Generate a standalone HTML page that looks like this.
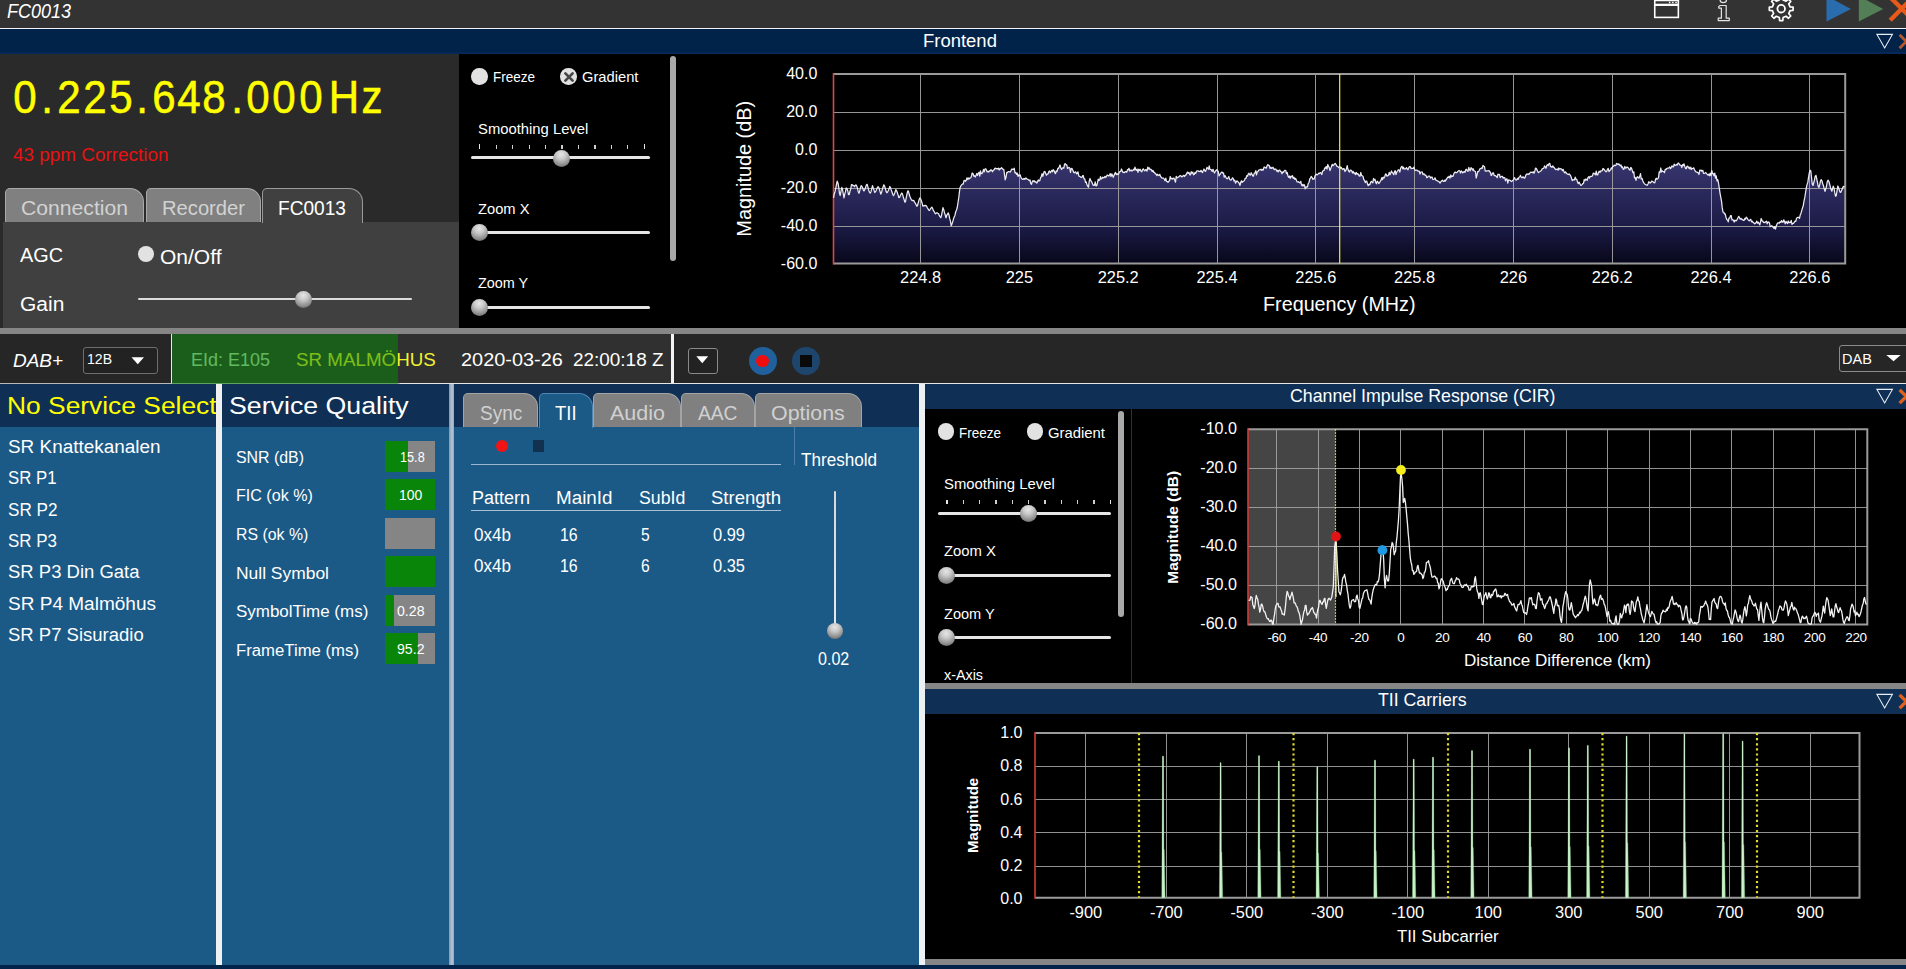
<!DOCTYPE html>
<html lang="en"><head><meta charset="utf-8"><title>FC0013</title>
<style>
html,body{margin:0;padding:0;background:#000;}
body{width:1906px;height:969px;overflow:hidden;position:relative;font-family:"Liberation Sans",sans-serif;}
div,span.t,svg{position:absolute;}
.t{white-space:nowrap;line-height:1;transform-origin:0 0;}
.i{font-style:italic;}
.th{border-radius:50%;width:17px;height:17px;background:radial-gradient(circle at 48% 26%,#e6e6e6 0%,#cacaca 30%,#8e8e8e 68%,#505050 100%);}
.rb{border-radius:50%;width:16.5px;height:16.5px;background:#e2e2e2;}
.tr{height:3px;background:#e6e6e6;border-radius:1.5px;}
.sb{background:#a8a8a8;border-radius:3px;width:6px;}
.tab{box-sizing:border-box;border:1px solid #a9a9a9;border-bottom:none;border-radius:5px 14px 0 0;background:#808080;}
.clip{overflow:hidden;}
</style></head>
<body>
<div style="left:0px;top:0px;width:1906px;height:28px;background:#333333;"></div>
<div style="left:0px;top:27.5px;width:1906px;height:1.6px;background:#f4f4f4;"></div>
<div style="left:0px;top:29px;width:1906px;height:25px;background:#01234a;"></div>
<div style="left:0px;top:51.5px;width:1906px;height:2.5px;background:#04285a;"></div>
<span id="t1" class="t i" style="left:7.00px;top:2.29px;font-size:19.5px;color:#fff;transform:scaleX(0.9225);">FC0013</span>
<span id="t2" class="t" style="left:923.30px;top:32.69px;font-size:17.5px;color:#fff;transform:scaleX(1.0550);">Frontend</span>
<div style="left:0px;top:54px;width:459px;height:274px;background:#2a2a2a;"></div>
<div style="left:3px;top:222px;width:456px;height:106px;background:#404040;"></div>
<div style="left:459px;top:54px;width:1447px;height:274px;background:#000;"></div>
<div id="freq" style="left:0;top:0;width:459px;height:130px"><span class="t" style="left:5.2px;width:40px;text-align:center;top:74.9px;font-size:45.5px;color:#ffff00;-webkit-text-stroke:0.55px #ffff00;transform:scaleX(0.925);transform-origin:50% 0">0</span><span class="t" style="left:26.5px;width:40px;text-align:center;top:74.9px;font-size:45.5px;color:#ffff00;-webkit-text-stroke:0.55px #ffff00;transform:scaleX(0.925);transform-origin:50% 0">.</span><span class="t" style="left:49.2px;width:40px;text-align:center;top:74.9px;font-size:45.5px;color:#ffff00;-webkit-text-stroke:0.55px #ffff00;transform:scaleX(0.925);transform-origin:50% 0">2</span><span class="t" style="left:74.8px;width:40px;text-align:center;top:74.9px;font-size:45.5px;color:#ffff00;-webkit-text-stroke:0.55px #ffff00;transform:scaleX(0.925);transform-origin:50% 0">2</span><span class="t" style="left:100.5px;width:40px;text-align:center;top:74.9px;font-size:45.5px;color:#ffff00;-webkit-text-stroke:0.55px #ffff00;transform:scaleX(0.925);transform-origin:50% 0">5</span><span class="t" style="left:122.0px;width:40px;text-align:center;top:74.9px;font-size:45.5px;color:#ffff00;-webkit-text-stroke:0.55px #ffff00;transform:scaleX(0.925);transform-origin:50% 0">.</span><span class="t" style="left:143.5px;width:40px;text-align:center;top:74.9px;font-size:45.5px;color:#ffff00;-webkit-text-stroke:0.55px #ffff00;transform:scaleX(0.925);transform-origin:50% 0">6</span><span class="t" style="left:168.8px;width:40px;text-align:center;top:74.9px;font-size:45.5px;color:#ffff00;-webkit-text-stroke:0.55px #ffff00;transform:scaleX(0.925);transform-origin:50% 0">4</span><span class="t" style="left:194.0px;width:40px;text-align:center;top:74.9px;font-size:45.5px;color:#ffff00;-webkit-text-stroke:0.55px #ffff00;transform:scaleX(0.925);transform-origin:50% 0">8</span><span class="t" style="left:216.8px;width:40px;text-align:center;top:74.9px;font-size:45.5px;color:#ffff00;-webkit-text-stroke:0.55px #ffff00;transform:scaleX(0.925);transform-origin:50% 0">.</span><span class="t" style="left:238.0px;width:40px;text-align:center;top:74.9px;font-size:45.5px;color:#ffff00;-webkit-text-stroke:0.55px #ffff00;transform:scaleX(0.925);transform-origin:50% 0">0</span><span class="t" style="left:264.2px;width:40px;text-align:center;top:74.9px;font-size:45.5px;color:#ffff00;-webkit-text-stroke:0.55px #ffff00;transform:scaleX(0.925);transform-origin:50% 0">0</span><span class="t" style="left:290.5px;width:40px;text-align:center;top:74.9px;font-size:45.5px;color:#ffff00;-webkit-text-stroke:0.55px #ffff00;transform:scaleX(0.925);transform-origin:50% 0">0</span><span class="t" style="left:324.2px;width:40px;text-align:center;top:74.9px;font-size:45.5px;color:#ffff00;-webkit-text-stroke:0.55px #ffff00;transform:scaleX(0.925);transform-origin:50% 0">H</span><span class="t" style="left:351.5px;width:40px;text-align:center;top:74.9px;font-size:45.5px;color:#ffff00;-webkit-text-stroke:0.55px #ffff00;transform:scaleX(0.925);transform-origin:50% 0">z</span></div>
<span id="t3" class="t" style="left:12.50px;top:147.39px;font-size:17.5px;color:#e81212;transform:scaleX(1.0801);">43 ppm Correction</span>
<div class="tab" style="left:5px;top:188px;width:139px;height:34px"></div>
<div class="tab" style="left:146px;top:188px;width:115px;height:34px"></div>
<div class="tab" style="left:262px;top:188px;width:101px;height:35px;background:#404040;border-color:#9a9a9a"></div>
<span id="t4" class="t" style="left:21.30px;top:197.77px;font-size:20px;color:#d2d2d2;transform:scaleX(1.0574);">Connection</span>
<span id="t5" class="t" style="left:162.00px;top:197.77px;font-size:20px;color:#d2d2d2;transform:scaleX(1.0089);">Recorder</span>
<span id="t6" class="t" style="left:278.30px;top:197.77px;font-size:20px;color:#fff;transform:scaleX(0.9556);">FC0013</span>
<span id="t7" class="t" style="left:20.20px;top:245.27px;font-size:20px;color:#fff;transform:scaleX(0.9944);">AGC</span>
<div class="rb" style="left:137.8px;top:246.3px;width:16px;height:16px"></div>
<span id="t8" class="t" style="left:159.50px;top:246.97px;font-size:20px;color:#fff;transform:scaleX(1.0504);">On/Off</span>
<span id="t9" class="t" style="left:20.20px;top:293.77px;font-size:20px;color:#fff;transform:scaleX(1.0485);">Gain</span>
<div class="tr" style="left:138px;top:297.8px;width:274px;height:2.6px;background:#dcdcdc"></div>
<div class="th" style="left:294.5px;top:290.5px"></div>
<div class="rb" style="left:471.2px;top:68.3px"></div>
<div class="rb" style="left:560.3px;top:68.3px"></div>
<svg style="left:562.5px;top:70.5px" width="12" height="12" viewBox="-6 -6 12 12"><path d="M-3.6-3.6L3.6 3.6M3.6-3.6L-3.6 3.6" stroke="#474747" stroke-width="2.7" stroke-linecap="round" fill="none"/></svg>
<span id="t10" class="t" style="left:493.00px;top:70.37px;font-size:14.8px;color:#fff;transform:scaleX(0.9118);">Freeze</span>
<span id="t11" class="t" style="left:582.00px;top:70.37px;font-size:14.8px;color:#fff;transform:scaleX(0.9936);">Gradient</span>
<span id="t12" class="t" style="left:477.70px;top:121.67px;font-size:14.8px;color:#fff;transform:scaleX(1.0006);">Smoothing Level</span>
<div style="left:479.1px;top:144.2px;width:1.4px;height:4.8px;background:#e6e6e6"></div><div style="left:495.6px;top:144.8px;width:1.4px;height:4.2px;background:#cfcfcf"></div><div style="left:512.0px;top:144.8px;width:1.4px;height:4.2px;background:#cfcfcf"></div><div style="left:528.5px;top:144.8px;width:1.4px;height:4.2px;background:#cfcfcf"></div><div style="left:544.9px;top:144.8px;width:1.4px;height:4.2px;background:#cfcfcf"></div><div style="left:561.4px;top:144.8px;width:1.4px;height:4.2px;background:#cfcfcf"></div><div style="left:577.8px;top:144.8px;width:1.4px;height:4.2px;background:#cfcfcf"></div><div style="left:594.2px;top:144.8px;width:1.4px;height:4.2px;background:#cfcfcf"></div><div style="left:610.7px;top:144.8px;width:1.4px;height:4.2px;background:#cfcfcf"></div><div style="left:627.1px;top:144.8px;width:1.4px;height:4.2px;background:#cfcfcf"></div><div style="left:643.6px;top:144.2px;width:1.4px;height:4.8px;background:#e6e6e6"></div>
<div class="tr" style="left:471.2px;top:156.2px;width:179px"></div>
<div class="th" style="left:553.3px;top:149.7px"></div>
<span id="t13" class="t" style="left:477.80px;top:201.67px;font-size:14.8px;color:#fff;transform:scaleX(0.9940);">Zoom X</span>
<div class="tr" style="left:478px;top:230.8px;width:172px"></div>
<div class="th" style="left:471.4px;top:224.2px"></div>
<span id="t14" class="t" style="left:477.80px;top:276.37px;font-size:14.8px;color:#fff;transform:scaleX(0.9739);">Zoom Y</span>
<div class="tr" style="left:478px;top:305.6px;width:172px"></div>
<div class="th" style="left:471.4px;top:299px"></div>
<div class="sb" style="left:670.4px;top:55.5px;height:205.5px"></div>
<div style="left:0px;top:328px;width:1906px;height:6px;background:#868686;"></div>
<div style="left:0px;top:334px;width:171px;height:49.5px;background:#262626;"></div>
<div style="left:171px;top:334px;width:1.3px;height:49.5px;background:#e8e8e8;"></div>
<div style="left:172px;top:334px;width:499px;height:49.5px;background:#303030;"></div>
<div style="left:671px;top:334px;width:3px;height:49.5px;background:#f2f2f2;"></div>
<div style="left:674px;top:334px;width:1232px;height:49.5px;background:#262626;"></div>
<div style="left:0px;top:383px;width:400px;height:1px;background:#b9b9b9;"></div>
<div style="left:400px;top:383px;width:1506px;height:1.3px;background:#e6e6e6;"></div>
<span id="t15" class="t i" style="left:13.00px;top:351.12px;font-size:19px;color:#fff;transform:scaleX(0.9966);">DAB+</span>
<div style="left:83px;top:347px;width:74.5px;height:26.5px;box-sizing:border-box;border:1px solid #6e6e6e;border-radius:3px;background:#222"></div>
<span id="t16" class="t" style="left:87.00px;top:352.04px;font-size:14.6px;color:#fff;transform:scaleX(0.9627);">12B</span>
<svg style="left:131px;top:357px" width="14" height="8" viewBox="0 0 14 8"><path d="M0.5 0.3H13L6.75 7.3Z" fill="#fff"/></svg>
<span id="t17" class="t" style="left:191.00px;top:350.12px;font-size:19px;color:#bce6bc;transform:scaleX(0.9466);">EId: E105</span>
<span id="t18" class="t" style="left:295.70px;top:350.12px;font-size:19px;color:#f2f22e;transform:scaleX(0.9882);">SR MALMÖHUS</span>
<div style="left:172px;top:334px;width:226px;height:49.5px;background:rgba(6,140,6,0.5);"></div>
<span id="t19" class="t" style="left:460.70px;top:350.12px;font-size:19px;color:#fff;transform:scaleX(1.0473);">2020-03-26</span>
<span id="t20" class="t" style="left:573.20px;top:350.12px;font-size:19px;color:#fff;transform:scaleX(0.9962);">22:00:18 Z</span>
<div style="left:687.5px;top:347.5px;width:30.5px;height:26.5px;box-sizing:border-box;border:1px solid #8a8a8a;border-radius:3px;background:#222"></div>
<svg style="left:696px;top:356px" width="13" height="8" viewBox="0 0 13 8"><path d="M0.3 0.2H12.2L6.25 7.2Z" fill="#fff"/></svg>
<div style="left:748.5px;top:347px;width:28px;height:28px;border-radius:50%;background:#20609c"></div>
<div style="left:756.2px;top:354.8px;width:12.6px;height:12.6px;border-radius:50%;background:#f20d0d"></div>
<div style="left:792px;top:347px;width:28px;height:28px;border-radius:50%;background:#1e456c"></div>
<div style="left:800.4px;top:355.4px;width:11.2px;height:11.2px;background:#0a0a0a"></div>
<div style="left:1839px;top:345px;width:80px;height:27px;box-sizing:border-box;border:1px solid #8a8a8a;border-radius:3px;background:#262626"></div>
<span id="t21" class="t" style="left:1841.70px;top:351.70px;font-size:14.3px;color:#fff;transform:scaleX(1.0134);">DAB</span>
<svg style="left:1885.5px;top:354.8px" width="15" height="7" viewBox="0 0 15 7"><path d="M0.3 0.1H14.7L7.5 6.3Z" fill="#fff"/></svg>
<div style="left:0px;top:384px;width:925px;height:581px;background:#1b5986;"></div>
<div style="left:0px;top:384px;width:919px;height:43px;background:#0f2f55;"></div>
<div style="left:0px;top:965px;width:1906px;height:4px;background:#01234a;"></div>
<div style="left:215.9px;top:384px;width:6.5px;height:581px;background:#eff0f2;"></div>
<div style="left:449px;top:384px;width:4.7px;height:581px;background:linear-gradient(90deg,#7f97b0,#b9c6d4 60%,#8fa4ba);"></div>
<div style="left:918.7px;top:384px;width:6.3px;height:581px;background:#eef1f4;"></div>
<div class="clip" style="left:0;top:384px;width:215.9px;height:60px"><div style="left:0;top:-384px;width:400px;height:60px"><span id="t22" class="t" style="left:7.00px;top:395.08px;font-size:23.3px;color:#ffff00;transform:scaleX(1.1320);">No Service Selected</span></div></div>
<span id="t23" class="t" style="left:8.00px;top:437.96px;font-size:18px;color:#fff;transform:scaleX(1.0509);">SR Knattekanalen</span>
<span id="t24" class="t" style="left:8.00px;top:469.29px;font-size:18px;color:#fff;transform:scaleX(0.9321);">SR P1</span>
<span id="t25" class="t" style="left:8.00px;top:500.62px;font-size:18px;color:#fff;transform:scaleX(0.9514);">SR P2</span>
<span id="t26" class="t" style="left:8.00px;top:531.95px;font-size:18px;color:#fff;transform:scaleX(0.9417);">SR P3</span>
<span id="t27" class="t" style="left:8.00px;top:563.28px;font-size:18px;color:#fff;transform:scaleX(1.0268);">SR P3 Din Gata</span>
<span id="t28" class="t" style="left:8.00px;top:594.61px;font-size:18px;color:#fff;transform:scaleX(1.0567);">SR P4 Malmöhus</span>
<span id="t29" class="t" style="left:8.00px;top:625.94px;font-size:18px;color:#fff;transform:scaleX(1.0274);">SR P7 Sisuradio</span>
<span id="t30" class="t" style="left:229.00px;top:395.08px;font-size:23.3px;color:#fff;transform:scaleX(1.1470);">Service Quality</span>
<span id="t31" class="t" style="left:235.70px;top:448.56px;font-size:17.3px;color:#fff;transform:scaleX(0.9197);">SNR (dB)</span>
<div style="left:385px;top:440.5px;width:50.2px;height:31px;background:#858585;"></div>
<div style="left:385px;top:440.5px;width:23px;height:31px;background:#098509;"></div>
<span id="t32" class="t" style="left:399.50px;top:448.70px;font-size:15px;color:#fff;transform:scaleX(0.8458);">15.8</span>
<span id="t33" class="t" style="left:235.70px;top:487.21px;font-size:17.3px;color:#fff;transform:scaleX(0.9300);">FIC (ok %)</span>
<div style="left:385px;top:479.05px;width:50.2px;height:31px;background:#858585;"></div>
<div style="left:385px;top:479.05px;width:50.2px;height:31px;background:#098509;"></div>
<span id="t34" class="t" style="left:399.20px;top:487.25px;font-size:15px;color:#fff;transform:scaleX(0.9308);">100</span>
<span id="t35" class="t" style="left:235.70px;top:525.86px;font-size:17.3px;color:#fff;transform:scaleX(0.9181);">RS (ok %)</span>
<div style="left:385px;top:517.6px;width:50.2px;height:31px;background:#858585;"></div>
<span id="t36" class="t" style="left:235.70px;top:564.51px;font-size:17.3px;color:#fff;transform:scaleX(1.0086);">Null Symbol</span>
<div style="left:385px;top:556.15px;width:50.2px;height:31px;background:#858585;"></div>
<div style="left:385px;top:556.15px;width:50.2px;height:31px;background:#098509;"></div>
<span id="t37" class="t" style="left:235.70px;top:603.16px;font-size:17.3px;color:#fff;transform:scaleX(0.9819);">SymbolTime (ms)</span>
<div style="left:385px;top:594.7px;width:50.2px;height:31px;background:#858585;"></div>
<div style="left:385px;top:594.7px;width:9.2px;height:31px;background:#098509;"></div>
<span id="t38" class="t" style="left:396.70px;top:602.90px;font-size:15px;color:#fff;transform:scaleX(0.9417);">0.28</span>
<span id="t39" class="t" style="left:235.70px;top:641.81px;font-size:17.3px;color:#fff;transform:scaleX(0.9681);">FrameTime (ms)</span>
<div style="left:385px;top:633.25px;width:50.2px;height:31px;background:#858585;"></div>
<div style="left:385px;top:633.25px;width:32.5px;height:31px;background:#098509;"></div>
<span id="t40" class="t" style="left:396.70px;top:641.45px;font-size:15px;color:#fff;transform:scaleX(0.9417);">95.2</span>
<div class="tab" style="left:463px;top:393px;width:75px;height:34px;border-color:#a4a4a4"></div>
<div class="tab" style="left:593px;top:393px;width:87.5px;height:34px;border-color:#a4a4a4"></div>
<div class="tab" style="left:681px;top:393px;width:73.5px;height:34px;border-color:#a4a4a4"></div>
<div class="tab" style="left:754.5px;top:393px;width:107px;height:34px;border-color:#a4a4a4"></div>
<div class="tab" style="left:539px;top:393px;width:54px;height:35px;background:#1b5986;border-color:#4f86b4"></div>
<span id="t41" class="t" style="left:479.50px;top:402.42px;font-size:21px;color:#d0d0d0;transform:scaleX(0.9039);">Sync</span>
<span id="t42" class="t" style="left:554.50px;top:402.42px;font-size:21px;color:#fff;transform:scaleX(0.8776);">TII</span>
<span id="t43" class="t" style="left:609.50px;top:402.42px;font-size:21px;color:#d0d0d0;transform:scaleX(1.0239);">Audio</span>
<span id="t44" class="t" style="left:698.00px;top:402.42px;font-size:21px;color:#d0d0d0;transform:scaleX(0.9146);">AAC</span>
<span id="t45" class="t" style="left:770.70px;top:402.42px;font-size:21px;color:#d0d0d0;transform:scaleX(1.0197);">Options</span>
<div style="left:496px;top:439.5px;width:12px;height:12px;border-radius:50%;background:#f01414"></div>
<div style="left:533px;top:439.5px;width:11px;height:12.2px;background:#12304f;"></div>
<div style="left:471px;top:464px;width:310px;height:1px;background:#9db6cf;"></div>
<div style="left:793.5px;top:427px;width:1px;height:37.5px;background:#4a7ea9;"></div>
<span id="t46" class="t" style="left:800.70px;top:450.66px;font-size:18px;color:#fff;transform:scaleX(0.9507);">Threshold</span>
<span id="t47" class="t" style="left:472.00px;top:488.96px;font-size:18px;color:#fff;transform:scaleX(0.9992);">Pattern</span>
<span id="t48" class="t" style="left:556.00px;top:488.96px;font-size:18px;color:#fff;transform:scaleX(1.0457);">MainId</span>
<span id="t49" class="t" style="left:638.70px;top:488.96px;font-size:18px;color:#fff;transform:scaleX(0.9841);">SubId</span>
<span id="t50" class="t" style="left:711.00px;top:488.96px;font-size:18px;color:#fff;transform:scaleX(1.0287);">Strength</span>
<div style="left:471px;top:509.5px;width:310px;height:1px;background:#a9c0d6;"></div>
<span id="t51" class="t" style="left:473.70px;top:525.96px;font-size:18px;color:#fff;transform:scaleX(0.9476);">0x4b</span>
<span id="t52" class="t" style="left:559.50px;top:525.96px;font-size:18px;color:#fff;transform:scaleX(0.8836);">16</span>
<span id="t53" class="t" style="left:641.30px;top:525.96px;font-size:18px;color:#fff;transform:scaleX(0.8686);">5</span>
<span id="t54" class="t" style="left:713.00px;top:525.96px;font-size:18px;color:#fff;transform:scaleX(0.9131);">0.99</span>
<span id="t55" class="t" style="left:473.70px;top:556.96px;font-size:18px;color:#fff;transform:scaleX(0.9476);">0x4b</span>
<span id="t56" class="t" style="left:559.50px;top:556.96px;font-size:18px;color:#fff;transform:scaleX(0.8836);">16</span>
<span id="t57" class="t" style="left:641.30px;top:556.96px;font-size:18px;color:#fff;transform:scaleX(0.8686);">6</span>
<span id="t58" class="t" style="left:713.00px;top:556.96px;font-size:18px;color:#fff;transform:scaleX(0.9131);">0.35</span>
<div style="left:834px;top:490.5px;width:2px;height:134px;background:linear-gradient(#d8d8d8,#e8e8e8);border-radius:1px"></div>
<div class="th" style="left:826.6px;top:622.6px;width:16.5px;height:16.5px"></div>
<span id="t59" class="t" style="left:817.70px;top:649.96px;font-size:18px;color:#fff;transform:scaleX(0.8931);">0.02</span>
<div style="left:925px;top:384.3px;width:981px;height:24.7px;background:#0f2f55;"></div>
<div style="left:925px;top:409px;width:981px;height:274px;background:#000;"></div>
<div style="left:925px;top:683px;width:981px;height:6px;background:#868686;"></div>
<div style="left:925px;top:689px;width:981px;height:25px;background:#0f2f55;"></div>
<div style="left:925px;top:714px;width:981px;height:245px;background:#000;"></div>
<div style="left:925px;top:959px;width:981px;height:6px;background:#868686;"></div>
<span id="t60" class="t" style="left:1290.00px;top:386.54px;font-size:18.5px;color:#fff;transform:scaleX(0.9598);">Channel Impulse Response (CIR)</span>
<span id="t61" class="t" style="left:1378.00px;top:691.34px;font-size:18.5px;color:#fff;transform:scaleX(0.9568);">TII Carriers</span>
<div class="clip" style="left:0;top:0;width:1906px;height:683px;pointer-events:none"><div class="rb" style="left:937.7px;top:423.4px"></div><div class="rb" style="left:1026.7px;top:423.4px"></div><span id="t62" class="t" style="left:959.00px;top:425.67px;font-size:14.8px;color:#fff;transform:scaleX(0.9118);">Freeze</span><span id="t63" class="t" style="left:1048.00px;top:425.67px;font-size:14.8px;color:#fff;transform:scaleX(1.0041);">Gradient</span><span id="t64" class="t" style="left:943.70px;top:476.67px;font-size:14.8px;color:#fff;transform:scaleX(1.0051);">Smoothing Level</span><div style="left:946.3px;top:499.6px;width:1.4px;height:4.8px;background:#e6e6e6"></div><div style="left:962.6px;top:500.2px;width:1.4px;height:4.2px;background:#cfcfcf"></div><div style="left:979.0px;top:500.2px;width:1.4px;height:4.2px;background:#cfcfcf"></div><div style="left:995.3px;top:500.2px;width:1.4px;height:4.2px;background:#cfcfcf"></div><div style="left:1011.6px;top:500.2px;width:1.4px;height:4.2px;background:#cfcfcf"></div><div style="left:1028.0px;top:500.2px;width:1.4px;height:4.2px;background:#cfcfcf"></div><div style="left:1044.3px;top:500.2px;width:1.4px;height:4.2px;background:#cfcfcf"></div><div style="left:1060.6px;top:500.2px;width:1.4px;height:4.2px;background:#cfcfcf"></div><div style="left:1076.9px;top:500.2px;width:1.4px;height:4.2px;background:#cfcfcf"></div><div style="left:1093.3px;top:500.2px;width:1.4px;height:4.2px;background:#cfcfcf"></div><div style="left:1109.6px;top:499.6px;width:1.4px;height:4.8px;background:#e6e6e6"></div><div class="tr" style="left:938px;top:511.6px;width:172.5px"></div><div class="th" style="left:1019.5px;top:505.2px"></div><span id="t65" class="t" style="left:943.70px;top:543.67px;font-size:14.8px;color:#fff;transform:scaleX(1.0036);">Zoom X</span><div class="tr" style="left:945px;top:574px;width:165.5px"></div><div class="th" style="left:938.2px;top:567px"></div><span id="t66" class="t" style="left:944.00px;top:606.67px;font-size:14.8px;color:#fff;transform:scaleX(0.9836);">Zoom Y</span><div class="tr" style="left:945px;top:636.2px;width:165.5px"></div><div class="th" style="left:938.2px;top:629.2px"></div><span id="t67" class="t" style="left:944.00px;top:668.37px;font-size:14.8px;color:#fff;transform:scaleX(0.9682);">x-Axis</span><div class="sb" style="left:1118px;top:410.5px;height:206.5px"></div><div style="left:1131px;top:409px;width:1px;height:274px;background:#303030"></div></div>
<svg style="left:700px;top:54px" width="1206" height="274" viewBox="700 54 1206 274"><defs><linearGradient id="g1" x1="0" y1="74" x2="0" y2="264" gradientUnits="userSpaceOnUse"><stop offset="0" stop-color="#5a58b0"/><stop offset="0.48" stop-color="#36346c"/><stop offset="0.8" stop-color="#1c1b47"/><stop offset="1" stop-color="#07071a"/></linearGradient></defs><polygon points="833.5,263.6 833.5,197.8 834.2,194.2 835.0,191.7 835.8,188.2 836.5,184.2 837.2,181.1 838.0,183.3 838.8,187.6 839.5,193.6 840.2,195.5 841.0,191.2 841.8,187.4 842.5,189.3 843.2,193.5 844.0,197.8 844.8,193.9 845.5,191.4 846.2,187.9 847.0,188.7 847.8,190.8 848.5,194.6 849.2,194.7 850.0,191.1 850.8,188.7 851.5,184.6 852.2,184.6 853.0,185.5 853.8,185.5 854.5,186.6 855.2,185.4 856.0,184.8 856.8,186.3 857.5,188.2 858.2,191.7 859.0,193.2 859.8,190.6 860.5,187.4 861.2,185.6 862.0,186.5 862.8,188.1 863.5,190.6 864.2,190.8 865.0,189.1 865.8,186.8 866.5,184.8 867.2,184.3 868.0,187.4 868.8,190.5 869.5,192.3 870.2,193.1 871.0,191.7 871.8,188.5 872.5,185.6 873.2,187.8 874.0,190.1 874.8,192.5 875.5,191.7 876.2,190.5 877.0,188.2 877.8,186.8 878.5,186.9 879.2,188.4 880.0,191.3 880.8,194.2 881.5,192.6 882.2,189.8 883.0,187.2 883.8,184.8 884.5,185.9 885.2,188.0 886.0,191.1 886.8,192.7 887.5,192.2 888.2,190.8 889.0,189.1 889.8,186.5 890.5,187.6 891.2,189.9 892.0,192.0 892.8,194.5 893.5,195.7 894.2,194.3 895.0,192.2 895.8,189.7 896.5,190.5 897.2,192.2 898.0,194.6 898.8,197.6 899.5,197.5 900.2,195.7 901.0,194.3 901.8,193.0 902.5,194.1 903.2,196.7 904.0,199.2 904.8,202.2 905.5,201.7 906.2,197.8 907.0,194.0 907.8,190.8 908.5,191.3 909.2,194.3 910.0,196.7 910.8,198.5 911.5,200.2 912.2,200.1 913.0,200.8 913.8,200.4 914.5,202.2 915.2,203.0 916.0,204.6 916.8,206.3 917.5,205.5 918.2,203.0 919.0,200.1 919.8,198.1 920.5,198.4 921.2,200.4 922.0,202.7 922.8,206.1 923.5,205.9 924.2,205.4 925.0,205.9 925.8,205.4 926.5,206.0 927.2,207.5 928.0,208.8 928.8,210.2 929.5,210.4 930.2,209.2 931.0,208.1 931.8,207.2 932.5,208.1 933.2,210.2 934.0,211.4 934.8,212.8 935.5,213.8 936.2,213.1 937.0,212.7 937.8,213.3 938.5,213.5 939.2,215.4 940.0,216.6 940.8,217.7 941.5,215.3 942.2,211.5 943.0,207.6 943.8,209.9 944.5,212.7 945.2,214.8 946.0,217.8 946.8,215.2 947.5,214.1 948.2,212.9 949.0,215.0 949.8,218.9 950.5,221.3 951.2,225.8 952.0,223.9 952.8,221.6 953.5,218.8 954.2,217.1 955.0,215.2 955.8,211.5 956.5,210.0 957.2,207.8 958.0,202.5 958.8,197.4 959.5,191.3 960.2,187.2 961.0,185.7 961.8,184.6 962.5,184.0 963.2,184.1 964.0,180.5 964.8,180.4 965.5,181.3 966.2,180.4 967.0,177.8 967.8,179.6 968.5,178.0 969.2,178.8 970.0,178.0 970.8,177.9 971.5,175.7 972.2,173.0 973.0,173.5 973.8,176.2 974.5,175.6 975.2,177.1 976.0,175.4 976.8,173.5 977.5,175.4 978.2,173.6 979.0,172.2 979.8,176.1 980.5,170.9 981.2,173.5 982.0,173.7 982.8,172.2 983.5,169.4 984.2,171.8 985.0,168.8 985.8,168.8 986.5,170.2 987.2,171.9 988.0,171.3 988.8,172.0 989.5,170.7 990.2,171.0 991.0,169.7 991.8,170.6 992.5,171.8 993.2,170.2 994.0,170.1 994.8,168.3 995.5,168.1 996.2,168.9 997.0,168.5 997.8,168.9 998.5,168.1 999.2,170.0 1000.0,168.5 1000.8,168.8 1001.5,167.6 1002.2,168.4 1003.0,169.3 1003.8,169.3 1004.5,174.5 1005.2,179.9 1006.0,177.3 1006.8,172.3 1007.5,172.5 1008.2,171.5 1009.0,171.5 1009.8,172.0 1010.5,171.9 1011.2,170.1 1012.0,168.9 1012.8,169.5 1013.5,169.4 1014.2,168.2 1015.0,172.9 1015.8,172.5 1016.5,174.4 1017.2,173.1 1018.0,176.4 1018.8,174.9 1019.5,175.7 1020.2,175.0 1021.0,177.6 1021.8,178.8 1022.5,179.3 1023.2,179.4 1024.0,178.4 1024.8,179.4 1025.5,178.1 1026.2,178.1 1027.0,179.2 1027.8,179.3 1028.5,179.9 1029.2,180.7 1030.0,180.0 1030.8,183.6 1031.5,184.4 1032.2,181.8 1033.0,180.6 1033.8,181.6 1034.5,180.8 1035.2,182.1 1036.0,181.9 1036.8,183.1 1037.5,181.7 1038.2,179.9 1039.0,181.0 1039.8,180.6 1040.5,177.9 1041.2,176.8 1042.0,173.6 1042.8,176.4 1043.5,173.9 1044.2,171.5 1045.0,171.6 1045.8,173.7 1046.5,175.1 1047.2,174.0 1048.0,174.1 1048.8,171.7 1049.5,170.9 1050.2,172.8 1051.0,171.7 1051.8,170.4 1052.5,171.8 1053.2,169.6 1054.0,170.6 1054.8,172.6 1055.5,173.5 1056.2,170.8 1057.0,171.7 1057.8,168.3 1058.5,168.6 1059.2,167.0 1060.0,165.0 1060.8,167.7 1061.5,169.4 1062.2,168.3 1063.0,167.7 1063.8,168.2 1064.5,164.3 1065.2,163.7 1066.0,165.0 1066.8,164.9 1067.5,168.5 1068.2,168.0 1069.0,167.3 1069.8,168.2 1070.5,172.5 1071.2,168.6 1072.0,168.4 1072.8,170.2 1073.5,172.0 1074.2,172.9 1075.0,172.2 1075.8,171.9 1076.5,173.9 1077.2,173.4 1078.0,171.9 1078.8,175.8 1079.5,176.5 1080.2,176.7 1081.0,177.3 1081.8,177.5 1082.5,175.9 1083.2,175.5 1084.0,178.9 1084.8,178.8 1085.5,182.4 1086.2,181.8 1087.0,184.9 1087.8,186.3 1088.5,187.2 1089.2,181.2 1090.0,178.5 1090.8,180.7 1091.5,181.4 1092.2,183.0 1093.0,184.9 1093.8,185.4 1094.5,185.3 1095.2,181.8 1096.0,185.9 1096.8,185.7 1097.5,182.7 1098.2,179.2 1099.0,180.5 1099.8,179.7 1100.5,176.6 1101.2,179.0 1102.0,178.4 1102.8,177.2 1103.5,177.8 1104.2,177.6 1105.0,176.3 1105.8,177.5 1106.5,176.2 1107.2,175.0 1108.0,175.4 1108.8,176.0 1109.5,175.2 1110.2,173.6 1111.0,176.7 1111.8,173.8 1112.5,175.4 1113.2,177.3 1114.0,175.4 1114.8,173.6 1115.5,172.3 1116.2,174.7 1117.0,173.6 1117.8,174.5 1118.5,174.2 1119.2,172.2 1120.0,171.6 1120.8,171.3 1121.5,169.0 1122.2,170.7 1123.0,172.5 1123.8,172.4 1124.5,172.7 1125.2,171.6 1126.0,171.6 1126.8,172.1 1127.5,169.7 1128.2,169.9 1129.0,168.3 1129.8,171.2 1130.5,170.0 1131.2,170.0 1132.0,171.0 1132.8,170.5 1133.5,169.2 1134.2,170.0 1135.0,167.2 1135.8,169.7 1136.5,170.3 1137.2,169.1 1138.0,172.3 1138.8,169.2 1139.5,170.4 1140.2,169.3 1141.0,171.2 1141.8,171.8 1142.5,169.6 1143.2,168.8 1144.0,170.1 1144.8,170.9 1145.5,169.6 1146.2,169.7 1147.0,171.1 1147.8,167.1 1148.5,168.9 1149.2,167.8 1150.0,169.6 1150.8,169.3 1151.5,169.9 1152.2,171.5 1153.0,170.5 1153.8,172.4 1154.5,172.4 1155.2,173.8 1156.0,173.9 1156.8,175.6 1157.5,174.2 1158.2,175.1 1159.0,175.4 1159.8,174.3 1160.5,176.5 1161.2,177.2 1162.0,178.1 1162.8,178.0 1163.5,178.0 1164.2,179.0 1165.0,180.6 1165.8,178.2 1166.5,181.4 1167.2,181.5 1168.0,182.4 1168.8,181.1 1169.5,181.0 1170.2,176.5 1171.0,178.9 1171.8,178.3 1172.5,179.1 1173.2,178.1 1174.0,178.2 1174.8,180.3 1175.5,182.2 1176.2,176.4 1177.0,177.9 1177.8,177.5 1178.5,176.9 1179.2,176.7 1180.0,175.6 1180.8,175.6 1181.5,176.8 1182.2,176.7 1183.0,175.9 1183.8,175.4 1184.5,176.5 1185.2,175.4 1186.0,174.9 1186.8,173.4 1187.5,172.1 1188.2,173.3 1189.0,172.4 1189.8,174.9 1190.5,174.9 1191.2,171.7 1192.0,173.3 1192.8,172.1 1193.5,174.8 1194.2,174.5 1195.0,172.5 1195.8,173.3 1196.5,171.3 1197.2,170.8 1198.0,170.8 1198.8,171.5 1199.5,171.4 1200.2,171.7 1201.0,170.4 1201.8,171.9 1202.5,172.6 1203.2,170.8 1204.0,169.0 1204.8,170.8 1205.5,171.4 1206.2,169.8 1207.0,167.4 1207.8,168.1 1208.5,169.3 1209.2,165.9 1210.0,169.4 1210.8,169.6 1211.5,169.9 1212.2,171.5 1213.0,169.3 1213.8,171.4 1214.5,173.0 1215.2,171.8 1216.0,170.4 1216.8,169.6 1217.5,171.0 1218.2,171.2 1219.0,175.9 1219.8,174.5 1220.5,173.6 1221.2,172.5 1222.0,172.0 1222.8,173.1 1223.5,172.9 1224.2,177.1 1225.0,175.6 1225.8,177.0 1226.5,178.5 1227.2,178.8 1228.0,177.8 1228.8,176.6 1229.5,179.0 1230.2,179.9 1231.0,180.2 1231.8,179.2 1232.5,177.8 1233.2,178.4 1234.0,181.0 1234.8,180.1 1235.5,183.2 1236.2,181.9 1237.0,180.8 1237.8,181.8 1238.5,182.1 1239.2,183.4 1240.0,185.4 1240.8,182.0 1241.5,180.7 1242.2,182.4 1243.0,181.3 1243.8,181.1 1244.5,180.4 1245.2,178.3 1246.0,178.3 1246.8,175.7 1247.5,176.1 1248.2,174.2 1249.0,173.2 1249.8,175.0 1250.5,175.1 1251.2,172.7 1252.0,174.2 1252.8,175.9 1253.5,176.2 1254.2,173.3 1255.0,172.9 1255.8,170.7 1256.5,174.8 1257.2,172.1 1258.0,171.5 1258.8,170.1 1259.5,169.8 1260.2,169.8 1261.0,169.1 1261.8,170.3 1262.5,169.4 1263.2,170.1 1264.0,167.2 1264.8,167.1 1265.5,168.0 1266.2,168.2 1267.0,166.0 1267.8,164.6 1268.5,165.4 1269.2,165.4 1270.0,168.3 1270.8,167.2 1271.5,168.3 1272.2,168.1 1273.0,167.3 1273.8,169.0 1274.5,169.7 1275.2,169.0 1276.0,169.1 1276.8,171.2 1277.5,170.3 1278.2,171.9 1279.0,170.3 1279.8,170.0 1280.5,171.6 1281.2,171.6 1282.0,173.9 1282.8,171.8 1283.5,172.3 1284.2,171.0 1285.0,170.3 1285.8,170.6 1286.5,173.5 1287.2,172.5 1288.0,176.1 1288.8,177.3 1289.5,176.0 1290.2,178.3 1291.0,176.2 1291.8,176.8 1292.5,175.7 1293.2,178.3 1294.0,177.3 1294.8,179.4 1295.5,178.4 1296.2,179.6 1297.0,181.8 1297.8,182.0 1298.5,181.7 1299.2,182.5 1300.0,182.9 1300.8,181.4 1301.5,184.9 1302.2,185.9 1303.0,184.3 1303.8,185.9 1304.5,184.8 1305.2,188.8 1306.0,187.3 1306.8,186.6 1307.5,186.9 1308.2,183.7 1309.0,182.5 1309.8,178.8 1310.5,178.1 1311.2,176.4 1312.0,177.3 1312.8,179.3 1313.5,178.8 1314.2,179.2 1315.0,175.9 1315.8,174.6 1316.5,174.2 1317.2,174.9 1318.0,174.2 1318.8,173.2 1319.5,173.5 1320.2,172.6 1321.0,173.0 1321.8,174.5 1322.5,171.5 1323.2,170.6 1324.0,170.5 1324.8,168.0 1325.5,168.3 1326.2,166.5 1327.0,169.1 1327.8,164.5 1328.5,166.5 1329.2,167.4 1330.0,170.6 1330.8,168.4 1331.5,166.4 1332.2,164.4 1333.0,165.8 1333.8,164.9 1334.5,163.8 1335.2,163.5 1336.0,164.5 1336.8,166.1 1337.5,166.4 1338.2,167.0 1339.0,167.7 1339.8,166.2 1340.5,168.3 1341.2,167.3 1342.0,168.8 1342.8,169.5 1343.5,168.6 1344.2,168.8 1345.0,171.5 1345.8,170.4 1346.5,168.6 1347.2,165.7 1348.0,169.6 1348.8,171.2 1349.5,172.1 1350.2,170.1 1351.0,170.2 1351.8,171.0 1352.5,173.0 1353.2,171.4 1354.0,173.3 1354.8,173.0 1355.5,174.7 1356.2,172.3 1357.0,174.2 1357.8,173.6 1358.5,174.6 1359.2,175.9 1360.0,176.3 1360.8,172.5 1361.5,175.4 1362.2,175.7 1363.0,176.2 1363.8,179.8 1364.5,180.1 1365.2,182.6 1366.0,181.2 1366.8,181.2 1367.5,184.1 1368.2,185.7 1369.0,184.2 1369.8,184.8 1370.5,182.8 1371.2,181.3 1372.0,182.1 1372.8,182.8 1373.5,178.5 1374.2,180.1 1375.0,179.3 1375.8,182.6 1376.5,183.8 1377.2,181.1 1378.0,182.0 1378.8,183.5 1379.5,182.6 1380.2,181.5 1381.0,180.2 1381.8,177.7 1382.5,179.7 1383.2,177.2 1384.0,178.1 1384.8,176.4 1385.5,174.0 1386.2,174.2 1387.0,176.2 1387.8,175.6 1388.5,175.2 1389.2,172.4 1390.0,174.9 1390.8,172.7 1391.5,171.0 1392.2,172.5 1393.0,173.2 1393.8,174.6 1394.5,171.7 1395.2,170.7 1396.0,174.5 1396.8,172.0 1397.5,171.0 1398.2,169.9 1399.0,169.9 1399.8,172.1 1400.5,168.8 1401.2,167.1 1402.0,166.3 1402.8,168.9 1403.5,167.2 1404.2,169.0 1405.0,168.8 1405.8,168.8 1406.5,167.6 1407.2,169.0 1408.0,169.8 1408.8,167.6 1409.5,166.7 1410.2,166.6 1411.0,168.6 1411.8,168.3 1412.5,168.4 1413.2,168.5 1414.0,167.1 1414.8,170.2 1415.5,170.3 1416.2,170.1 1417.0,170.2 1417.8,171.1 1418.5,171.0 1419.2,171.2 1420.0,174.0 1420.8,172.1 1421.5,172.0 1422.2,171.9 1423.0,174.7 1423.8,173.8 1424.5,174.2 1425.2,175.3 1426.0,175.4 1426.8,177.7 1427.5,177.5 1428.2,176.3 1429.0,176.0 1429.8,176.3 1430.5,178.1 1431.2,177.3 1432.0,177.0 1432.8,179.4 1433.5,179.5 1434.2,179.2 1435.0,177.8 1435.8,180.1 1436.5,180.3 1437.2,180.9 1438.0,181.2 1438.8,181.3 1439.5,182.6 1440.2,183.0 1441.0,181.5 1441.8,180.7 1442.5,180.1 1443.2,181.3 1444.0,181.3 1444.8,180.1 1445.5,181.0 1446.2,179.5 1447.0,178.5 1447.8,177.2 1448.5,177.3 1449.2,176.2 1450.0,178.2 1450.8,175.0 1451.5,176.8 1452.2,176.2 1453.0,176.3 1453.8,174.1 1454.5,172.5 1455.2,172.1 1456.0,172.6 1456.8,172.7 1457.5,171.8 1458.2,171.1 1459.0,170.4 1459.8,171.1 1460.5,173.0 1461.2,170.9 1462.0,171.6 1462.8,173.0 1463.5,172.0 1464.2,171.4 1465.0,172.4 1465.8,169.6 1466.5,169.2 1467.2,170.7 1468.0,171.3 1468.8,167.3 1469.5,169.7 1470.2,170.8 1471.0,167.7 1471.8,168.4 1472.5,170.1 1473.2,168.8 1474.0,171.0 1474.8,171.1 1475.5,171.8 1476.2,178.0 1477.0,175.0 1477.8,171.4 1478.5,171.7 1479.2,170.5 1480.0,168.7 1480.8,168.7 1481.5,167.8 1482.2,168.3 1483.0,165.3 1483.8,166.2 1484.5,166.5 1485.2,170.9 1486.0,171.3 1486.8,170.9 1487.5,170.8 1488.2,170.8 1489.0,170.5 1489.8,171.8 1490.5,172.5 1491.2,175.5 1492.0,174.5 1492.8,172.8 1493.5,172.9 1494.2,175.6 1495.0,175.7 1495.8,175.9 1496.5,176.7 1497.2,177.7 1498.0,174.2 1498.8,174.7 1499.5,174.3 1500.2,177.6 1501.0,176.7 1501.8,176.3 1502.5,176.4 1503.2,178.2 1504.0,177.5 1504.8,177.8 1505.5,180.9 1506.2,179.0 1507.0,178.8 1507.8,183.1 1508.5,179.9 1509.2,180.2 1510.0,180.4 1510.8,180.9 1511.5,181.5 1512.2,181.0 1513.0,180.1 1513.8,179.0 1514.5,177.6 1515.2,179.3 1516.0,180.2 1516.8,179.6 1517.5,178.4 1518.2,179.3 1519.0,177.2 1519.8,176.8 1520.5,175.4 1521.2,177.1 1522.0,177.9 1522.8,176.8 1523.5,177.1 1524.2,178.3 1525.0,177.8 1525.8,175.3 1526.5,174.2 1527.2,174.3 1528.0,173.9 1528.8,174.4 1529.5,173.7 1530.2,172.5 1531.0,172.1 1531.8,172.5 1532.5,172.7 1533.2,171.7 1534.0,173.3 1534.8,171.2 1535.5,168.2 1536.2,168.4 1537.0,169.9 1537.8,171.5 1538.5,172.7 1539.2,171.9 1540.0,171.5 1540.8,171.0 1541.5,170.2 1542.2,168.9 1543.0,168.5 1543.8,168.1 1544.5,165.9 1545.2,166.8 1546.0,168.3 1546.8,165.4 1547.5,164.7 1548.2,165.5 1549.0,163.8 1549.8,163.3 1550.5,166.5 1551.2,166.5 1552.0,167.3 1552.8,165.9 1553.5,167.1 1554.2,167.5 1555.0,168.8 1555.8,169.6 1556.5,169.5 1557.2,168.9 1558.0,170.2 1558.8,168.0 1559.5,169.1 1560.2,168.9 1561.0,168.7 1561.8,169.4 1562.5,170.6 1563.2,169.4 1564.0,171.9 1564.8,172.9 1565.5,171.8 1566.2,172.8 1567.0,173.9 1567.8,174.1 1568.5,174.5 1569.2,173.9 1570.0,174.8 1570.8,176.1 1571.5,178.1 1572.2,180.6 1573.0,179.7 1573.8,179.9 1574.5,180.0 1575.2,177.2 1576.0,179.2 1576.8,179.3 1577.5,182.0 1578.2,183.6 1579.0,182.1 1579.8,183.4 1580.5,185.1 1581.2,185.3 1582.0,184.7 1582.8,183.6 1583.5,183.4 1584.2,179.5 1585.0,180.7 1585.8,178.9 1586.5,179.6 1587.2,180.3 1588.0,177.4 1588.8,176.7 1589.5,178.1 1590.2,176.4 1591.0,176.4 1591.8,176.4 1592.5,175.8 1593.2,173.2 1594.0,173.3 1594.8,174.0 1595.5,174.8 1596.2,171.1 1597.0,174.9 1597.8,174.8 1598.5,172.4 1599.2,171.2 1600.0,172.4 1600.8,170.8 1601.5,170.8 1602.2,170.7 1603.0,168.5 1603.8,169.1 1604.5,170.0 1605.2,170.9 1606.0,171.8 1606.8,171.2 1607.5,169.1 1608.2,168.5 1609.0,171.7 1609.8,170.3 1610.5,170.2 1611.2,167.8 1612.0,168.8 1612.8,166.3 1613.5,166.4 1614.2,165.1 1615.0,165.5 1615.8,165.6 1616.5,163.5 1617.2,163.8 1618.0,164.6 1618.8,163.8 1619.5,164.9 1620.2,165.8 1621.0,165.0 1621.8,167.6 1622.5,166.8 1623.2,169.3 1624.0,169.1 1624.8,166.4 1625.5,168.1 1626.2,167.9 1627.0,166.9 1627.8,167.5 1628.5,168.0 1629.2,169.6 1630.0,170.2 1630.8,167.5 1631.5,168.2 1632.2,170.3 1633.0,172.9 1633.8,171.8 1634.5,177.9 1635.2,177.4 1636.0,180.3 1636.8,177.4 1637.5,176.7 1638.2,177.6 1639.0,178.2 1639.8,175.9 1640.5,173.7 1641.2,178.9 1642.0,178.3 1642.8,180.7 1643.5,182.4 1644.2,183.3 1645.0,184.2 1645.8,184.6 1646.5,185.0 1647.2,185.3 1648.0,184.0 1648.8,181.7 1649.5,182.5 1650.2,183.1 1651.0,182.3 1651.8,181.0 1652.5,181.6 1653.2,182.1 1654.0,182.7 1654.8,182.8 1655.5,179.5 1656.2,178.2 1657.0,179.3 1657.8,178.6 1658.5,177.6 1659.2,171.9 1660.0,172.5 1660.8,168.0 1661.5,171.8 1662.2,170.8 1663.0,171.3 1663.8,171.6 1664.5,172.7 1665.2,169.4 1666.0,169.5 1666.8,168.5 1667.5,168.2 1668.2,168.1 1669.0,167.9 1669.8,166.9 1670.5,168.6 1671.2,167.6 1672.0,165.8 1672.8,166.8 1673.5,166.9 1674.2,164.2 1675.0,165.3 1675.8,165.1 1676.5,164.5 1677.2,165.2 1678.0,163.1 1678.8,163.2 1679.5,164.5 1680.2,165.2 1681.0,165.4 1681.8,167.6 1682.5,164.6 1683.2,165.5 1684.0,163.9 1684.8,166.5 1685.5,168.4 1686.2,168.8 1687.0,166.3 1687.8,166.1 1688.5,168.0 1689.2,167.2 1690.0,169.1 1690.8,167.2 1691.5,169.3 1692.2,168.5 1693.0,168.4 1693.8,167.9 1694.5,169.7 1695.2,171.0 1696.0,171.8 1696.8,172.1 1697.5,172.3 1698.2,173.0 1699.0,174.5 1699.8,170.2 1700.5,170.5 1701.2,170.1 1702.0,171.3 1702.8,170.3 1703.5,173.4 1704.2,173.4 1705.0,173.0 1705.8,172.5 1706.5,173.6 1707.2,174.2 1708.0,175.1 1708.8,174.2 1709.5,175.8 1710.2,173.1 1711.0,175.6 1711.8,170.5 1712.5,173.7 1713.2,173.5 1714.0,175.7 1714.8,173.2 1715.5,178.1 1716.2,175.8 1717.0,180.8 1717.8,179.7 1718.5,183.0 1719.2,187.6 1720.0,193.1 1720.8,197.4 1721.5,201.1 1722.2,207.4 1723.0,212.2 1723.8,212.3 1724.5,214.0 1725.2,213.9 1726.0,217.5 1726.8,219.4 1727.5,219.9 1728.2,221.8 1729.0,218.0 1729.8,218.0 1730.5,215.6 1731.2,215.5 1732.0,220.0 1732.8,219.7 1733.5,220.2 1734.2,222.1 1735.0,220.1 1735.8,220.8 1736.5,220.7 1737.2,219.3 1738.0,217.8 1738.8,216.4 1739.5,217.7 1740.2,219.1 1741.0,218.3 1741.8,219.5 1742.5,219.3 1743.2,220.4 1744.0,220.4 1744.8,218.4 1745.5,219.2 1746.2,217.1 1747.0,217.9 1747.8,219.3 1748.5,220.2 1749.2,220.8 1750.0,219.8 1750.8,219.3 1751.5,221.8 1752.2,221.2 1753.0,222.4 1753.8,222.8 1754.5,223.8 1755.2,223.4 1756.0,222.8 1756.8,221.1 1757.5,223.2 1758.2,222.1 1759.0,223.3 1759.8,224.9 1760.5,221.9 1761.2,218.5 1762.0,220.8 1762.8,221.1 1763.5,222.5 1764.2,222.4 1765.0,222.7 1765.8,221.7 1766.5,221.1 1767.2,223.8 1768.0,221.9 1768.8,222.3 1769.5,223.0 1770.2,226.6 1771.0,226.4 1771.8,225.7 1772.5,226.4 1773.2,227.3 1774.0,228.5 1774.8,226.6 1775.5,229.2 1776.2,226.2 1777.0,224.0 1777.8,222.8 1778.5,222.8 1779.2,223.3 1780.0,221.9 1780.8,222.4 1781.5,220.5 1782.2,221.9 1783.0,222.3 1783.8,219.8 1784.5,221.4 1785.2,223.8 1786.0,221.4 1786.8,222.6 1787.5,223.5 1788.2,221.0 1789.0,222.6 1789.8,222.4 1790.5,222.6 1791.2,220.4 1792.0,224.3 1792.8,223.4 1793.5,223.3 1794.2,222.3 1795.0,221.2 1795.8,221.4 1796.5,218.3 1797.2,217.8 1798.0,217.3 1798.8,217.4 1799.5,218.3 1800.2,215.1 1801.0,213.2 1801.8,210.4 1802.5,207.9 1803.2,206.0 1804.0,201.2 1804.8,197.4 1805.5,193.0 1806.2,188.4 1807.0,184.6 1807.8,182.4 1808.5,177.6 1809.2,173.3 1810.0,170.2 1810.8,171.0 1811.5,177.2 1812.2,183.9 1813.0,185.5 1813.8,182.5 1814.5,179.8 1815.2,176.2 1816.0,175.5 1816.8,179.2 1817.5,182.5 1818.2,186.3 1819.0,187.4 1819.8,184.3 1820.5,181.0 1821.2,179.6 1822.0,181.0 1822.8,184.0 1823.5,185.8 1824.2,188.7 1825.0,191.4 1825.8,188.8 1826.5,186.0 1827.2,182.1 1828.0,180.2 1828.8,181.3 1829.5,183.5 1830.2,186.3 1831.0,189.3 1831.8,191.2 1832.5,189.0 1833.2,186.2 1834.0,188.0 1834.8,192.9 1835.5,196.1 1836.2,195.9 1837.0,190.8 1837.8,186.0 1838.5,187.3 1839.2,189.8 1840.0,192.1 1840.8,192.3 1841.5,190.5 1842.2,189.1 1843.0,187.0 1843.8,186.3 1844.5,187.4 1845.2,263.6" fill="url(#g1)"/><path d="M920.5 74.0V263.6M1019.5 74.0V263.6M1118.5 74.0V263.6M1217.5 74.0V263.6M1315.5 74.0V263.6M1414.5 74.0V263.6M1513.5 74.0V263.6M1612.5 74.0V263.6M1711.5 74.0V263.6M1809.5 74.0V263.6M833.5 112.5H1845.2M833.5 150.5H1845.2M833.5 188.5H1845.2M833.5 226.5H1845.2" stroke="#a2a2a2" stroke-width="1" stroke-opacity="0.92" fill="none"/><path d="M833.5 74.0H1845.2V263.6H833.5" stroke="#9a9a9a" stroke-width="2" fill="none"/><path d="M833.5 73.0V264.6" stroke="#d84848" stroke-width="1.6"/><polyline points="833.5,197.8 834.2,194.2 835.0,191.7 835.8,188.2 836.5,184.2 837.2,181.1 838.0,183.3 838.8,187.6 839.5,193.6 840.2,195.5 841.0,191.2 841.8,187.4 842.5,189.3 843.2,193.5 844.0,197.8 844.8,193.9 845.5,191.4 846.2,187.9 847.0,188.7 847.8,190.8 848.5,194.6 849.2,194.7 850.0,191.1 850.8,188.7 851.5,184.6 852.2,184.6 853.0,185.5 853.8,185.5 854.5,186.6 855.2,185.4 856.0,184.8 856.8,186.3 857.5,188.2 858.2,191.7 859.0,193.2 859.8,190.6 860.5,187.4 861.2,185.6 862.0,186.5 862.8,188.1 863.5,190.6 864.2,190.8 865.0,189.1 865.8,186.8 866.5,184.8 867.2,184.3 868.0,187.4 868.8,190.5 869.5,192.3 870.2,193.1 871.0,191.7 871.8,188.5 872.5,185.6 873.2,187.8 874.0,190.1 874.8,192.5 875.5,191.7 876.2,190.5 877.0,188.2 877.8,186.8 878.5,186.9 879.2,188.4 880.0,191.3 880.8,194.2 881.5,192.6 882.2,189.8 883.0,187.2 883.8,184.8 884.5,185.9 885.2,188.0 886.0,191.1 886.8,192.7 887.5,192.2 888.2,190.8 889.0,189.1 889.8,186.5 890.5,187.6 891.2,189.9 892.0,192.0 892.8,194.5 893.5,195.7 894.2,194.3 895.0,192.2 895.8,189.7 896.5,190.5 897.2,192.2 898.0,194.6 898.8,197.6 899.5,197.5 900.2,195.7 901.0,194.3 901.8,193.0 902.5,194.1 903.2,196.7 904.0,199.2 904.8,202.2 905.5,201.7 906.2,197.8 907.0,194.0 907.8,190.8 908.5,191.3 909.2,194.3 910.0,196.7 910.8,198.5 911.5,200.2 912.2,200.1 913.0,200.8 913.8,200.4 914.5,202.2 915.2,203.0 916.0,204.6 916.8,206.3 917.5,205.5 918.2,203.0 919.0,200.1 919.8,198.1 920.5,198.4 921.2,200.4 922.0,202.7 922.8,206.1 923.5,205.9 924.2,205.4 925.0,205.9 925.8,205.4 926.5,206.0 927.2,207.5 928.0,208.8 928.8,210.2 929.5,210.4 930.2,209.2 931.0,208.1 931.8,207.2 932.5,208.1 933.2,210.2 934.0,211.4 934.8,212.8 935.5,213.8 936.2,213.1 937.0,212.7 937.8,213.3 938.5,213.5 939.2,215.4 940.0,216.6 940.8,217.7 941.5,215.3 942.2,211.5 943.0,207.6 943.8,209.9 944.5,212.7 945.2,214.8 946.0,217.8 946.8,215.2 947.5,214.1 948.2,212.9 949.0,215.0 949.8,218.9 950.5,221.3 951.2,225.8 952.0,223.9 952.8,221.6 953.5,218.8 954.2,217.1 955.0,215.2 955.8,211.5 956.5,210.0 957.2,207.8 958.0,202.5 958.8,197.4 959.5,191.3 960.2,187.2 961.0,185.7 961.8,184.6 962.5,184.0 963.2,184.1 964.0,180.5 964.8,180.4 965.5,181.3 966.2,180.4 967.0,177.8 967.8,179.6 968.5,178.0 969.2,178.8 970.0,178.0 970.8,177.9 971.5,175.7 972.2,173.0 973.0,173.5 973.8,176.2 974.5,175.6 975.2,177.1 976.0,175.4 976.8,173.5 977.5,175.4 978.2,173.6 979.0,172.2 979.8,176.1 980.5,170.9 981.2,173.5 982.0,173.7 982.8,172.2 983.5,169.4 984.2,171.8 985.0,168.8 985.8,168.8 986.5,170.2 987.2,171.9 988.0,171.3 988.8,172.0 989.5,170.7 990.2,171.0 991.0,169.7 991.8,170.6 992.5,171.8 993.2,170.2 994.0,170.1 994.8,168.3 995.5,168.1 996.2,168.9 997.0,168.5 997.8,168.9 998.5,168.1 999.2,170.0 1000.0,168.5 1000.8,168.8 1001.5,167.6 1002.2,168.4 1003.0,169.3 1003.8,169.3 1004.5,174.5 1005.2,179.9 1006.0,177.3 1006.8,172.3 1007.5,172.5 1008.2,171.5 1009.0,171.5 1009.8,172.0 1010.5,171.9 1011.2,170.1 1012.0,168.9 1012.8,169.5 1013.5,169.4 1014.2,168.2 1015.0,172.9 1015.8,172.5 1016.5,174.4 1017.2,173.1 1018.0,176.4 1018.8,174.9 1019.5,175.7 1020.2,175.0 1021.0,177.6 1021.8,178.8 1022.5,179.3 1023.2,179.4 1024.0,178.4 1024.8,179.4 1025.5,178.1 1026.2,178.1 1027.0,179.2 1027.8,179.3 1028.5,179.9 1029.2,180.7 1030.0,180.0 1030.8,183.6 1031.5,184.4 1032.2,181.8 1033.0,180.6 1033.8,181.6 1034.5,180.8 1035.2,182.1 1036.0,181.9 1036.8,183.1 1037.5,181.7 1038.2,179.9 1039.0,181.0 1039.8,180.6 1040.5,177.9 1041.2,176.8 1042.0,173.6 1042.8,176.4 1043.5,173.9 1044.2,171.5 1045.0,171.6 1045.8,173.7 1046.5,175.1 1047.2,174.0 1048.0,174.1 1048.8,171.7 1049.5,170.9 1050.2,172.8 1051.0,171.7 1051.8,170.4 1052.5,171.8 1053.2,169.6 1054.0,170.6 1054.8,172.6 1055.5,173.5 1056.2,170.8 1057.0,171.7 1057.8,168.3 1058.5,168.6 1059.2,167.0 1060.0,165.0 1060.8,167.7 1061.5,169.4 1062.2,168.3 1063.0,167.7 1063.8,168.2 1064.5,164.3 1065.2,163.7 1066.0,165.0 1066.8,164.9 1067.5,168.5 1068.2,168.0 1069.0,167.3 1069.8,168.2 1070.5,172.5 1071.2,168.6 1072.0,168.4 1072.8,170.2 1073.5,172.0 1074.2,172.9 1075.0,172.2 1075.8,171.9 1076.5,173.9 1077.2,173.4 1078.0,171.9 1078.8,175.8 1079.5,176.5 1080.2,176.7 1081.0,177.3 1081.8,177.5 1082.5,175.9 1083.2,175.5 1084.0,178.9 1084.8,178.8 1085.5,182.4 1086.2,181.8 1087.0,184.9 1087.8,186.3 1088.5,187.2 1089.2,181.2 1090.0,178.5 1090.8,180.7 1091.5,181.4 1092.2,183.0 1093.0,184.9 1093.8,185.4 1094.5,185.3 1095.2,181.8 1096.0,185.9 1096.8,185.7 1097.5,182.7 1098.2,179.2 1099.0,180.5 1099.8,179.7 1100.5,176.6 1101.2,179.0 1102.0,178.4 1102.8,177.2 1103.5,177.8 1104.2,177.6 1105.0,176.3 1105.8,177.5 1106.5,176.2 1107.2,175.0 1108.0,175.4 1108.8,176.0 1109.5,175.2 1110.2,173.6 1111.0,176.7 1111.8,173.8 1112.5,175.4 1113.2,177.3 1114.0,175.4 1114.8,173.6 1115.5,172.3 1116.2,174.7 1117.0,173.6 1117.8,174.5 1118.5,174.2 1119.2,172.2 1120.0,171.6 1120.8,171.3 1121.5,169.0 1122.2,170.7 1123.0,172.5 1123.8,172.4 1124.5,172.7 1125.2,171.6 1126.0,171.6 1126.8,172.1 1127.5,169.7 1128.2,169.9 1129.0,168.3 1129.8,171.2 1130.5,170.0 1131.2,170.0 1132.0,171.0 1132.8,170.5 1133.5,169.2 1134.2,170.0 1135.0,167.2 1135.8,169.7 1136.5,170.3 1137.2,169.1 1138.0,172.3 1138.8,169.2 1139.5,170.4 1140.2,169.3 1141.0,171.2 1141.8,171.8 1142.5,169.6 1143.2,168.8 1144.0,170.1 1144.8,170.9 1145.5,169.6 1146.2,169.7 1147.0,171.1 1147.8,167.1 1148.5,168.9 1149.2,167.8 1150.0,169.6 1150.8,169.3 1151.5,169.9 1152.2,171.5 1153.0,170.5 1153.8,172.4 1154.5,172.4 1155.2,173.8 1156.0,173.9 1156.8,175.6 1157.5,174.2 1158.2,175.1 1159.0,175.4 1159.8,174.3 1160.5,176.5 1161.2,177.2 1162.0,178.1 1162.8,178.0 1163.5,178.0 1164.2,179.0 1165.0,180.6 1165.8,178.2 1166.5,181.4 1167.2,181.5 1168.0,182.4 1168.8,181.1 1169.5,181.0 1170.2,176.5 1171.0,178.9 1171.8,178.3 1172.5,179.1 1173.2,178.1 1174.0,178.2 1174.8,180.3 1175.5,182.2 1176.2,176.4 1177.0,177.9 1177.8,177.5 1178.5,176.9 1179.2,176.7 1180.0,175.6 1180.8,175.6 1181.5,176.8 1182.2,176.7 1183.0,175.9 1183.8,175.4 1184.5,176.5 1185.2,175.4 1186.0,174.9 1186.8,173.4 1187.5,172.1 1188.2,173.3 1189.0,172.4 1189.8,174.9 1190.5,174.9 1191.2,171.7 1192.0,173.3 1192.8,172.1 1193.5,174.8 1194.2,174.5 1195.0,172.5 1195.8,173.3 1196.5,171.3 1197.2,170.8 1198.0,170.8 1198.8,171.5 1199.5,171.4 1200.2,171.7 1201.0,170.4 1201.8,171.9 1202.5,172.6 1203.2,170.8 1204.0,169.0 1204.8,170.8 1205.5,171.4 1206.2,169.8 1207.0,167.4 1207.8,168.1 1208.5,169.3 1209.2,165.9 1210.0,169.4 1210.8,169.6 1211.5,169.9 1212.2,171.5 1213.0,169.3 1213.8,171.4 1214.5,173.0 1215.2,171.8 1216.0,170.4 1216.8,169.6 1217.5,171.0 1218.2,171.2 1219.0,175.9 1219.8,174.5 1220.5,173.6 1221.2,172.5 1222.0,172.0 1222.8,173.1 1223.5,172.9 1224.2,177.1 1225.0,175.6 1225.8,177.0 1226.5,178.5 1227.2,178.8 1228.0,177.8 1228.8,176.6 1229.5,179.0 1230.2,179.9 1231.0,180.2 1231.8,179.2 1232.5,177.8 1233.2,178.4 1234.0,181.0 1234.8,180.1 1235.5,183.2 1236.2,181.9 1237.0,180.8 1237.8,181.8 1238.5,182.1 1239.2,183.4 1240.0,185.4 1240.8,182.0 1241.5,180.7 1242.2,182.4 1243.0,181.3 1243.8,181.1 1244.5,180.4 1245.2,178.3 1246.0,178.3 1246.8,175.7 1247.5,176.1 1248.2,174.2 1249.0,173.2 1249.8,175.0 1250.5,175.1 1251.2,172.7 1252.0,174.2 1252.8,175.9 1253.5,176.2 1254.2,173.3 1255.0,172.9 1255.8,170.7 1256.5,174.8 1257.2,172.1 1258.0,171.5 1258.8,170.1 1259.5,169.8 1260.2,169.8 1261.0,169.1 1261.8,170.3 1262.5,169.4 1263.2,170.1 1264.0,167.2 1264.8,167.1 1265.5,168.0 1266.2,168.2 1267.0,166.0 1267.8,164.6 1268.5,165.4 1269.2,165.4 1270.0,168.3 1270.8,167.2 1271.5,168.3 1272.2,168.1 1273.0,167.3 1273.8,169.0 1274.5,169.7 1275.2,169.0 1276.0,169.1 1276.8,171.2 1277.5,170.3 1278.2,171.9 1279.0,170.3 1279.8,170.0 1280.5,171.6 1281.2,171.6 1282.0,173.9 1282.8,171.8 1283.5,172.3 1284.2,171.0 1285.0,170.3 1285.8,170.6 1286.5,173.5 1287.2,172.5 1288.0,176.1 1288.8,177.3 1289.5,176.0 1290.2,178.3 1291.0,176.2 1291.8,176.8 1292.5,175.7 1293.2,178.3 1294.0,177.3 1294.8,179.4 1295.5,178.4 1296.2,179.6 1297.0,181.8 1297.8,182.0 1298.5,181.7 1299.2,182.5 1300.0,182.9 1300.8,181.4 1301.5,184.9 1302.2,185.9 1303.0,184.3 1303.8,185.9 1304.5,184.8 1305.2,188.8 1306.0,187.3 1306.8,186.6 1307.5,186.9 1308.2,183.7 1309.0,182.5 1309.8,178.8 1310.5,178.1 1311.2,176.4 1312.0,177.3 1312.8,179.3 1313.5,178.8 1314.2,179.2 1315.0,175.9 1315.8,174.6 1316.5,174.2 1317.2,174.9 1318.0,174.2 1318.8,173.2 1319.5,173.5 1320.2,172.6 1321.0,173.0 1321.8,174.5 1322.5,171.5 1323.2,170.6 1324.0,170.5 1324.8,168.0 1325.5,168.3 1326.2,166.5 1327.0,169.1 1327.8,164.5 1328.5,166.5 1329.2,167.4 1330.0,170.6 1330.8,168.4 1331.5,166.4 1332.2,164.4 1333.0,165.8 1333.8,164.9 1334.5,163.8 1335.2,163.5 1336.0,164.5 1336.8,166.1 1337.5,166.4 1338.2,167.0 1339.0,167.7 1339.8,166.2 1340.5,168.3 1341.2,167.3 1342.0,168.8 1342.8,169.5 1343.5,168.6 1344.2,168.8 1345.0,171.5 1345.8,170.4 1346.5,168.6 1347.2,165.7 1348.0,169.6 1348.8,171.2 1349.5,172.1 1350.2,170.1 1351.0,170.2 1351.8,171.0 1352.5,173.0 1353.2,171.4 1354.0,173.3 1354.8,173.0 1355.5,174.7 1356.2,172.3 1357.0,174.2 1357.8,173.6 1358.5,174.6 1359.2,175.9 1360.0,176.3 1360.8,172.5 1361.5,175.4 1362.2,175.7 1363.0,176.2 1363.8,179.8 1364.5,180.1 1365.2,182.6 1366.0,181.2 1366.8,181.2 1367.5,184.1 1368.2,185.7 1369.0,184.2 1369.8,184.8 1370.5,182.8 1371.2,181.3 1372.0,182.1 1372.8,182.8 1373.5,178.5 1374.2,180.1 1375.0,179.3 1375.8,182.6 1376.5,183.8 1377.2,181.1 1378.0,182.0 1378.8,183.5 1379.5,182.6 1380.2,181.5 1381.0,180.2 1381.8,177.7 1382.5,179.7 1383.2,177.2 1384.0,178.1 1384.8,176.4 1385.5,174.0 1386.2,174.2 1387.0,176.2 1387.8,175.6 1388.5,175.2 1389.2,172.4 1390.0,174.9 1390.8,172.7 1391.5,171.0 1392.2,172.5 1393.0,173.2 1393.8,174.6 1394.5,171.7 1395.2,170.7 1396.0,174.5 1396.8,172.0 1397.5,171.0 1398.2,169.9 1399.0,169.9 1399.8,172.1 1400.5,168.8 1401.2,167.1 1402.0,166.3 1402.8,168.9 1403.5,167.2 1404.2,169.0 1405.0,168.8 1405.8,168.8 1406.5,167.6 1407.2,169.0 1408.0,169.8 1408.8,167.6 1409.5,166.7 1410.2,166.6 1411.0,168.6 1411.8,168.3 1412.5,168.4 1413.2,168.5 1414.0,167.1 1414.8,170.2 1415.5,170.3 1416.2,170.1 1417.0,170.2 1417.8,171.1 1418.5,171.0 1419.2,171.2 1420.0,174.0 1420.8,172.1 1421.5,172.0 1422.2,171.9 1423.0,174.7 1423.8,173.8 1424.5,174.2 1425.2,175.3 1426.0,175.4 1426.8,177.7 1427.5,177.5 1428.2,176.3 1429.0,176.0 1429.8,176.3 1430.5,178.1 1431.2,177.3 1432.0,177.0 1432.8,179.4 1433.5,179.5 1434.2,179.2 1435.0,177.8 1435.8,180.1 1436.5,180.3 1437.2,180.9 1438.0,181.2 1438.8,181.3 1439.5,182.6 1440.2,183.0 1441.0,181.5 1441.8,180.7 1442.5,180.1 1443.2,181.3 1444.0,181.3 1444.8,180.1 1445.5,181.0 1446.2,179.5 1447.0,178.5 1447.8,177.2 1448.5,177.3 1449.2,176.2 1450.0,178.2 1450.8,175.0 1451.5,176.8 1452.2,176.2 1453.0,176.3 1453.8,174.1 1454.5,172.5 1455.2,172.1 1456.0,172.6 1456.8,172.7 1457.5,171.8 1458.2,171.1 1459.0,170.4 1459.8,171.1 1460.5,173.0 1461.2,170.9 1462.0,171.6 1462.8,173.0 1463.5,172.0 1464.2,171.4 1465.0,172.4 1465.8,169.6 1466.5,169.2 1467.2,170.7 1468.0,171.3 1468.8,167.3 1469.5,169.7 1470.2,170.8 1471.0,167.7 1471.8,168.4 1472.5,170.1 1473.2,168.8 1474.0,171.0 1474.8,171.1 1475.5,171.8 1476.2,178.0 1477.0,175.0 1477.8,171.4 1478.5,171.7 1479.2,170.5 1480.0,168.7 1480.8,168.7 1481.5,167.8 1482.2,168.3 1483.0,165.3 1483.8,166.2 1484.5,166.5 1485.2,170.9 1486.0,171.3 1486.8,170.9 1487.5,170.8 1488.2,170.8 1489.0,170.5 1489.8,171.8 1490.5,172.5 1491.2,175.5 1492.0,174.5 1492.8,172.8 1493.5,172.9 1494.2,175.6 1495.0,175.7 1495.8,175.9 1496.5,176.7 1497.2,177.7 1498.0,174.2 1498.8,174.7 1499.5,174.3 1500.2,177.6 1501.0,176.7 1501.8,176.3 1502.5,176.4 1503.2,178.2 1504.0,177.5 1504.8,177.8 1505.5,180.9 1506.2,179.0 1507.0,178.8 1507.8,183.1 1508.5,179.9 1509.2,180.2 1510.0,180.4 1510.8,180.9 1511.5,181.5 1512.2,181.0 1513.0,180.1 1513.8,179.0 1514.5,177.6 1515.2,179.3 1516.0,180.2 1516.8,179.6 1517.5,178.4 1518.2,179.3 1519.0,177.2 1519.8,176.8 1520.5,175.4 1521.2,177.1 1522.0,177.9 1522.8,176.8 1523.5,177.1 1524.2,178.3 1525.0,177.8 1525.8,175.3 1526.5,174.2 1527.2,174.3 1528.0,173.9 1528.8,174.4 1529.5,173.7 1530.2,172.5 1531.0,172.1 1531.8,172.5 1532.5,172.7 1533.2,171.7 1534.0,173.3 1534.8,171.2 1535.5,168.2 1536.2,168.4 1537.0,169.9 1537.8,171.5 1538.5,172.7 1539.2,171.9 1540.0,171.5 1540.8,171.0 1541.5,170.2 1542.2,168.9 1543.0,168.5 1543.8,168.1 1544.5,165.9 1545.2,166.8 1546.0,168.3 1546.8,165.4 1547.5,164.7 1548.2,165.5 1549.0,163.8 1549.8,163.3 1550.5,166.5 1551.2,166.5 1552.0,167.3 1552.8,165.9 1553.5,167.1 1554.2,167.5 1555.0,168.8 1555.8,169.6 1556.5,169.5 1557.2,168.9 1558.0,170.2 1558.8,168.0 1559.5,169.1 1560.2,168.9 1561.0,168.7 1561.8,169.4 1562.5,170.6 1563.2,169.4 1564.0,171.9 1564.8,172.9 1565.5,171.8 1566.2,172.8 1567.0,173.9 1567.8,174.1 1568.5,174.5 1569.2,173.9 1570.0,174.8 1570.8,176.1 1571.5,178.1 1572.2,180.6 1573.0,179.7 1573.8,179.9 1574.5,180.0 1575.2,177.2 1576.0,179.2 1576.8,179.3 1577.5,182.0 1578.2,183.6 1579.0,182.1 1579.8,183.4 1580.5,185.1 1581.2,185.3 1582.0,184.7 1582.8,183.6 1583.5,183.4 1584.2,179.5 1585.0,180.7 1585.8,178.9 1586.5,179.6 1587.2,180.3 1588.0,177.4 1588.8,176.7 1589.5,178.1 1590.2,176.4 1591.0,176.4 1591.8,176.4 1592.5,175.8 1593.2,173.2 1594.0,173.3 1594.8,174.0 1595.5,174.8 1596.2,171.1 1597.0,174.9 1597.8,174.8 1598.5,172.4 1599.2,171.2 1600.0,172.4 1600.8,170.8 1601.5,170.8 1602.2,170.7 1603.0,168.5 1603.8,169.1 1604.5,170.0 1605.2,170.9 1606.0,171.8 1606.8,171.2 1607.5,169.1 1608.2,168.5 1609.0,171.7 1609.8,170.3 1610.5,170.2 1611.2,167.8 1612.0,168.8 1612.8,166.3 1613.5,166.4 1614.2,165.1 1615.0,165.5 1615.8,165.6 1616.5,163.5 1617.2,163.8 1618.0,164.6 1618.8,163.8 1619.5,164.9 1620.2,165.8 1621.0,165.0 1621.8,167.6 1622.5,166.8 1623.2,169.3 1624.0,169.1 1624.8,166.4 1625.5,168.1 1626.2,167.9 1627.0,166.9 1627.8,167.5 1628.5,168.0 1629.2,169.6 1630.0,170.2 1630.8,167.5 1631.5,168.2 1632.2,170.3 1633.0,172.9 1633.8,171.8 1634.5,177.9 1635.2,177.4 1636.0,180.3 1636.8,177.4 1637.5,176.7 1638.2,177.6 1639.0,178.2 1639.8,175.9 1640.5,173.7 1641.2,178.9 1642.0,178.3 1642.8,180.7 1643.5,182.4 1644.2,183.3 1645.0,184.2 1645.8,184.6 1646.5,185.0 1647.2,185.3 1648.0,184.0 1648.8,181.7 1649.5,182.5 1650.2,183.1 1651.0,182.3 1651.8,181.0 1652.5,181.6 1653.2,182.1 1654.0,182.7 1654.8,182.8 1655.5,179.5 1656.2,178.2 1657.0,179.3 1657.8,178.6 1658.5,177.6 1659.2,171.9 1660.0,172.5 1660.8,168.0 1661.5,171.8 1662.2,170.8 1663.0,171.3 1663.8,171.6 1664.5,172.7 1665.2,169.4 1666.0,169.5 1666.8,168.5 1667.5,168.2 1668.2,168.1 1669.0,167.9 1669.8,166.9 1670.5,168.6 1671.2,167.6 1672.0,165.8 1672.8,166.8 1673.5,166.9 1674.2,164.2 1675.0,165.3 1675.8,165.1 1676.5,164.5 1677.2,165.2 1678.0,163.1 1678.8,163.2 1679.5,164.5 1680.2,165.2 1681.0,165.4 1681.8,167.6 1682.5,164.6 1683.2,165.5 1684.0,163.9 1684.8,166.5 1685.5,168.4 1686.2,168.8 1687.0,166.3 1687.8,166.1 1688.5,168.0 1689.2,167.2 1690.0,169.1 1690.8,167.2 1691.5,169.3 1692.2,168.5 1693.0,168.4 1693.8,167.9 1694.5,169.7 1695.2,171.0 1696.0,171.8 1696.8,172.1 1697.5,172.3 1698.2,173.0 1699.0,174.5 1699.8,170.2 1700.5,170.5 1701.2,170.1 1702.0,171.3 1702.8,170.3 1703.5,173.4 1704.2,173.4 1705.0,173.0 1705.8,172.5 1706.5,173.6 1707.2,174.2 1708.0,175.1 1708.8,174.2 1709.5,175.8 1710.2,173.1 1711.0,175.6 1711.8,170.5 1712.5,173.7 1713.2,173.5 1714.0,175.7 1714.8,173.2 1715.5,178.1 1716.2,175.8 1717.0,180.8 1717.8,179.7 1718.5,183.0 1719.2,187.6 1720.0,193.1 1720.8,197.4 1721.5,201.1 1722.2,207.4 1723.0,212.2 1723.8,212.3 1724.5,214.0 1725.2,213.9 1726.0,217.5 1726.8,219.4 1727.5,219.9 1728.2,221.8 1729.0,218.0 1729.8,218.0 1730.5,215.6 1731.2,215.5 1732.0,220.0 1732.8,219.7 1733.5,220.2 1734.2,222.1 1735.0,220.1 1735.8,220.8 1736.5,220.7 1737.2,219.3 1738.0,217.8 1738.8,216.4 1739.5,217.7 1740.2,219.1 1741.0,218.3 1741.8,219.5 1742.5,219.3 1743.2,220.4 1744.0,220.4 1744.8,218.4 1745.5,219.2 1746.2,217.1 1747.0,217.9 1747.8,219.3 1748.5,220.2 1749.2,220.8 1750.0,219.8 1750.8,219.3 1751.5,221.8 1752.2,221.2 1753.0,222.4 1753.8,222.8 1754.5,223.8 1755.2,223.4 1756.0,222.8 1756.8,221.1 1757.5,223.2 1758.2,222.1 1759.0,223.3 1759.8,224.9 1760.5,221.9 1761.2,218.5 1762.0,220.8 1762.8,221.1 1763.5,222.5 1764.2,222.4 1765.0,222.7 1765.8,221.7 1766.5,221.1 1767.2,223.8 1768.0,221.9 1768.8,222.3 1769.5,223.0 1770.2,226.6 1771.0,226.4 1771.8,225.7 1772.5,226.4 1773.2,227.3 1774.0,228.5 1774.8,226.6 1775.5,229.2 1776.2,226.2 1777.0,224.0 1777.8,222.8 1778.5,222.8 1779.2,223.3 1780.0,221.9 1780.8,222.4 1781.5,220.5 1782.2,221.9 1783.0,222.3 1783.8,219.8 1784.5,221.4 1785.2,223.8 1786.0,221.4 1786.8,222.6 1787.5,223.5 1788.2,221.0 1789.0,222.6 1789.8,222.4 1790.5,222.6 1791.2,220.4 1792.0,224.3 1792.8,223.4 1793.5,223.3 1794.2,222.3 1795.0,221.2 1795.8,221.4 1796.5,218.3 1797.2,217.8 1798.0,217.3 1798.8,217.4 1799.5,218.3 1800.2,215.1 1801.0,213.2 1801.8,210.4 1802.5,207.9 1803.2,206.0 1804.0,201.2 1804.8,197.4 1805.5,193.0 1806.2,188.4 1807.0,184.6 1807.8,182.4 1808.5,177.6 1809.2,173.3 1810.0,170.2 1810.8,171.0 1811.5,177.2 1812.2,183.9 1813.0,185.5 1813.8,182.5 1814.5,179.8 1815.2,176.2 1816.0,175.5 1816.8,179.2 1817.5,182.5 1818.2,186.3 1819.0,187.4 1819.8,184.3 1820.5,181.0 1821.2,179.6 1822.0,181.0 1822.8,184.0 1823.5,185.8 1824.2,188.7 1825.0,191.4 1825.8,188.8 1826.5,186.0 1827.2,182.1 1828.0,180.2 1828.8,181.3 1829.5,183.5 1830.2,186.3 1831.0,189.3 1831.8,191.2 1832.5,189.0 1833.2,186.2 1834.0,188.0 1834.8,192.9 1835.5,196.1 1836.2,195.9 1837.0,190.8 1837.8,186.0 1838.5,187.3 1839.2,189.8 1840.0,192.1 1840.8,192.3 1841.5,190.5 1842.2,189.1 1843.0,187.0 1843.8,186.3 1844.5,187.4" fill="none" stroke="#ecebf2" stroke-width="1.25" stroke-linejoin="round"/><path d="M1339.7 74.0V263.6" stroke="#efef3a" stroke-width="1.2"/><text x="817.3" y="78.7" font-size="16" text-anchor="end" font-family="Liberation Sans, sans-serif" fill="#fff">40.0</text><text x="817.3" y="116.7" font-size="16" text-anchor="end" font-family="Liberation Sans, sans-serif" fill="#fff">20.0</text><text x="817.3" y="154.7" font-size="16" text-anchor="end" font-family="Liberation Sans, sans-serif" fill="#fff">0.0</text><text x="817.3" y="192.7" font-size="16" text-anchor="end" font-family="Liberation Sans, sans-serif" fill="#fff">-20.0</text><text x="817.3" y="230.7" font-size="16" text-anchor="end" font-family="Liberation Sans, sans-serif" fill="#fff">-40.0</text><text x="817.3" y="268.7" font-size="16" text-anchor="end" font-family="Liberation Sans, sans-serif" fill="#fff">-60.0</text><text x="920.6" y="283.2" font-size="16.4" text-anchor="middle" font-family="Liberation Sans, sans-serif" fill="#fff">224.8</text><text x="1019.4" y="283.2" font-size="16.4" text-anchor="middle" font-family="Liberation Sans, sans-serif" fill="#fff">225</text><text x="1118.2" y="283.2" font-size="16.4" text-anchor="middle" font-family="Liberation Sans, sans-serif" fill="#fff">225.2</text><text x="1217.0" y="283.2" font-size="16.4" text-anchor="middle" font-family="Liberation Sans, sans-serif" fill="#fff">225.4</text><text x="1315.8" y="283.2" font-size="16.4" text-anchor="middle" font-family="Liberation Sans, sans-serif" fill="#fff">225.6</text><text x="1414.6" y="283.2" font-size="16.4" text-anchor="middle" font-family="Liberation Sans, sans-serif" fill="#fff">225.8</text><text x="1513.4" y="283.2" font-size="16.4" text-anchor="middle" font-family="Liberation Sans, sans-serif" fill="#fff">226</text><text x="1612.2" y="283.2" font-size="16.4" text-anchor="middle" font-family="Liberation Sans, sans-serif" fill="#fff">226.2</text><text x="1711.0" y="283.2" font-size="16.4" text-anchor="middle" font-family="Liberation Sans, sans-serif" fill="#fff">226.4</text><text x="1809.8" y="283.2" font-size="16.4" text-anchor="middle" font-family="Liberation Sans, sans-serif" fill="#fff">226.6</text><text x="1339.3" y="311" font-size="20" text-anchor="middle" textLength="152.5" lengthAdjust="spacingAndGlyphs" font-family="Liberation Sans, sans-serif" fill="#fff">Frequency (MHz)</text><text transform="translate(750.8 168.8) rotate(-90)" font-size="20" text-anchor="middle" textLength="135.7" lengthAdjust="spacingAndGlyphs" font-family="Liberation Sans, sans-serif" fill="#fff">Magnitude (dB)</text></svg>
<svg style="left:1135px;top:409px" width="771" height="274" viewBox="1135 409 771 274"><rect x="1248.0" y="429.3" width="87.59999999999991" height="195.3" fill="#454545"/><path d="M1276.5 429.3V624.6M1318.5 429.3V624.6M1359.5 429.3V624.6M1400.5 429.3V624.6M1442.5 429.3V624.6M1483.5 429.3V624.6M1524.5 429.3V624.6M1566.5 429.3V624.6M1607.5 429.3V624.6M1649.5 429.3V624.6M1690.5 429.3V624.6M1731.5 429.3V624.6M1773.5 429.3V624.6M1814.5 429.3V624.6M1855.5 429.3V624.6M1248.0 468.5H1867.3M1248.0 507.5H1867.3M1248.0 546.5H1867.3M1248.0 585.5H1867.3" stroke="#a2a2a2" stroke-width="1" stroke-opacity="0.9" fill="none"/><path d="M1248.0 429.3H1867.3V624.6H1248.0" stroke="#9a9a9a" stroke-width="2" fill="none"/><path d="M1248.0 428.3V625.6" stroke="#d33a3a" stroke-width="1.6"/><path d="M1335.5 429.3V624.6" stroke="#f2f03a" stroke-width="1.2" stroke-dasharray="1.5 1.5"/><polyline points="1248.6,600.3 1249.3,600.3 1250.0,600.1 1250.7,596.7 1251.4,597.1 1252.1,597.8 1252.8,604.7 1253.5,606.3 1254.2,608.6 1254.9,606.1 1255.6,599.6 1256.3,595.4 1257.0,597.8 1257.7,599.2 1258.4,604.2 1259.1,607.4 1259.8,612.1 1260.5,609.6 1261.2,604.4 1261.9,604.1 1262.6,606.2 1263.3,609.4 1264.0,611.6 1264.7,611.6 1265.4,613.4 1266.1,616.1 1266.8,617.7 1267.5,619.0 1268.2,618.6 1268.9,620.1 1269.6,621.4 1270.3,621.5 1271.0,620.0 1271.7,620.6 1272.4,623.5 1273.1,624.3 1273.8,618.9 1274.5,614.9 1275.2,609.3 1275.9,605.5 1276.6,604.5 1277.3,603.4 1278.0,603.5 1278.7,606.7 1279.4,607.1 1280.1,606.9 1280.8,609.2 1281.5,610.7 1282.2,614.1 1282.9,613.9 1283.6,614.5 1284.3,615.1 1285.0,610.2 1285.7,603.9 1286.4,596.0 1287.1,591.4 1287.8,592.7 1288.5,596.1 1289.2,596.7 1289.9,599.7 1290.6,596.6 1291.3,595.1 1292.0,592.2 1292.7,595.2 1293.4,598.4 1294.1,602.9 1294.8,602.6 1295.5,603.8 1296.2,605.9 1296.9,606.6 1297.6,608.3 1298.3,611.3 1299.0,612.5 1299.7,615.2 1300.4,619.7 1301.1,624.3 1301.8,621.7 1302.5,619.6 1303.2,615.2 1303.9,611.6 1304.6,610.3 1305.3,605.4 1306.0,605.4 1306.7,611.9 1307.4,615.2 1308.1,613.9 1308.8,613.8 1309.5,612.1 1310.2,610.9 1310.9,608.9 1311.6,609.1 1312.3,607.4 1313.0,609.0 1313.7,612.7 1314.4,612.8 1315.1,614.5 1315.8,614.4 1316.5,618.1 1317.2,612.7 1317.9,609.5 1318.6,607.0 1319.3,601.2 1320.0,600.2 1320.7,602.3 1321.4,603.5 1322.1,604.4 1322.8,601.9 1323.5,601.9 1324.2,598.8 1324.9,598.4 1325.6,604.3 1326.3,608.3 1327.0,604.4 1327.7,600.7 1328.4,598.7 1329.1,598.3 1329.8,599.3 1330.5,600.0 1331.2,598.5 1331.9,596.6 1332.6,591.6 1333.3,586.8 1334.0,567.7 1334.7,546.8 1335.4,541.7 1336.1,541.8 1336.8,553.0 1337.5,569.5 1338.2,580.3 1338.9,591.8 1339.6,592.8 1340.3,594.8 1341.0,591.9 1341.7,586.8 1342.4,579.7 1343.1,577.2 1343.8,577.2 1344.5,574.4 1345.2,577.7 1345.9,582.3 1346.6,584.9 1347.3,590.6 1348.0,594.2 1348.7,600.5 1349.4,605.9 1350.1,608.2 1350.8,606.0 1351.5,601.2 1352.2,600.1 1352.9,599.9 1353.6,599.5 1354.3,601.6 1355.0,601.8 1355.7,601.2 1356.4,596.6 1357.1,595.1 1357.8,598.9 1358.5,600.6 1359.2,607.1 1359.9,608.4 1360.6,605.2 1361.3,602.2 1362.0,598.9 1362.7,597.8 1363.4,593.6 1364.1,592.1 1364.8,590.8 1365.5,590.5 1366.2,590.2 1366.9,589.8 1367.6,592.9 1368.3,596.8 1369.0,599.5 1369.7,599.9 1370.4,601.6 1371.1,604.1 1371.8,597.6 1372.5,593.2 1373.2,589.8 1373.9,587.8 1374.6,586.0 1375.3,584.6 1376.0,584.3 1376.7,584.9 1377.4,581.3 1378.1,581.9 1378.8,579.6 1379.5,574.1 1380.2,565.1 1380.9,555.7 1381.6,549.7 1382.3,546.2 1383.0,550.8 1383.7,560.2 1384.4,579.7 1385.1,587.8 1385.8,579.3 1386.5,575.5 1387.2,578.7 1387.9,581.1 1388.6,580.7 1389.3,573.6 1390.0,561.7 1390.7,549.4 1391.4,547.0 1392.1,542.5 1392.8,543.6 1393.5,547.6 1394.2,554.7 1394.9,552.4 1395.6,551.2 1396.3,542.3 1397.0,536.8 1397.7,528.7 1398.4,520.7 1399.1,509.7 1399.8,492.2 1400.5,476.5 1401.2,474.2 1401.9,478.5 1402.6,486.4 1403.3,502.5 1404.0,501.2 1404.7,498.4 1405.4,502.1 1406.1,508.6 1406.8,516.5 1407.5,523.9 1408.2,533.5 1408.9,540.3 1409.6,549.3 1410.3,557.8 1411.0,562.2 1411.7,564.5 1412.4,570.7 1413.1,570.5 1413.8,574.3 1414.5,573.8 1415.2,572.0 1415.9,571.8 1416.6,571.2 1417.3,566.8 1418.0,565.4 1418.7,569.4 1419.4,573.0 1420.1,572.9 1420.8,573.4 1421.5,574.2 1422.2,575.0 1422.9,578.5 1423.6,577.0 1424.3,572.5 1425.0,572.0 1425.7,569.1 1426.4,562.6 1427.1,562.2 1427.8,562.1 1428.5,560.7 1429.2,563.9 1429.9,566.0 1430.6,569.2 1431.3,574.1 1432.0,577.0 1432.7,577.1 1433.4,576.9 1434.1,576.1 1434.8,576.2 1435.5,577.0 1436.2,578.7 1436.9,578.1 1437.6,582.5 1438.3,583.4 1439.0,588.9 1439.7,586.9 1440.4,582.9 1441.1,579.1 1441.8,578.7 1442.5,580.3 1443.2,581.2 1443.9,584.0 1444.6,586.2 1445.3,587.8 1446.0,590.7 1446.7,589.1 1447.4,589.4 1448.1,586.9 1448.8,585.8 1449.5,585.1 1450.2,580.5 1450.9,579.4 1451.6,578.3 1452.3,581.1 1453.0,583.2 1453.7,583.7 1454.4,583.6 1455.1,581.0 1455.8,580.1 1456.5,577.7 1457.2,578.8 1457.9,579.1 1458.6,579.0 1459.3,580.1 1460.0,583.5 1460.7,584.5 1461.4,586.4 1462.1,587.4 1462.8,587.4 1463.5,586.8 1464.2,584.9 1464.9,585.1 1465.6,585.5 1466.3,584.2 1467.0,585.6 1467.7,586.5 1468.4,587.1 1469.1,590.2 1469.8,589.9 1470.5,589.9 1471.2,586.7 1471.9,586.6 1472.6,587.0 1473.3,586.2 1474.0,586.3 1474.7,579.0 1475.4,576.7 1476.1,582.6 1476.8,588.9 1477.5,591.8 1478.2,593.2 1478.9,598.4 1479.6,593.4 1480.3,592.8 1481.0,596.4 1481.7,600.3 1482.4,604.3 1483.1,604.6 1483.8,598.7 1484.5,595.4 1485.2,594.6 1485.9,592.5 1486.6,596.4 1487.3,599.0 1488.0,596.9 1488.7,592.8 1489.4,593.5 1490.1,597.2 1490.8,597.9 1491.5,594.4 1492.2,595.6 1492.9,594.6 1493.6,591.2 1494.3,591.2 1495.0,589.6 1495.7,589.0 1496.4,591.3 1497.1,596.9 1497.8,596.2 1498.5,594.9 1499.2,596.7 1499.9,596.7 1500.6,595.7 1501.3,598.0 1502.0,596.0 1502.7,596.5 1503.4,596.1 1504.1,595.7 1504.8,593.4 1505.5,593.9 1506.2,595.6 1506.9,595.0 1507.6,594.5 1508.3,598.3 1509.0,599.7 1509.7,601.9 1510.4,602.0 1511.1,603.2 1511.8,605.0 1512.5,604.9 1513.2,604.4 1513.9,603.5 1514.6,606.9 1515.3,608.3 1516.0,610.0 1516.7,611.0 1517.4,607.1 1518.1,604.3 1518.8,604.7 1519.5,604.2 1520.2,602.9 1520.9,600.6 1521.6,604.2 1522.3,605.7 1523.0,609.5 1523.7,612.5 1524.4,612.5 1525.1,613.1 1525.8,612.8 1526.5,614.5 1527.2,611.4 1527.9,606.5 1528.6,603.0 1529.3,598.1 1530.0,597.8 1530.7,598.9 1531.4,597.6 1532.1,601.7 1532.8,604.9 1533.5,604.2 1534.2,604.4 1534.9,604.9 1535.6,608.3 1536.3,608.6 1537.0,600.7 1537.7,596.1 1538.4,592.7 1539.1,593.2 1539.8,595.4 1540.5,600.1 1541.2,599.3 1541.9,598.7 1542.6,604.0 1543.3,604.1 1544.0,606.5 1544.7,608.6 1545.4,606.3 1546.1,603.9 1546.8,603.7 1547.5,601.8 1548.2,600.8 1548.9,599.2 1549.6,596.9 1550.3,596.8 1551.0,599.6 1551.7,602.5 1552.4,605.8 1553.1,609.9 1553.8,613.3 1554.5,606.6 1555.2,605.1 1555.9,599.0 1556.6,600.3 1557.3,605.4 1558.0,605.9 1558.7,605.4 1559.4,609.2 1560.1,616.7 1560.8,620.6 1561.5,622.4 1562.2,616.1 1562.9,606.6 1563.6,603.2 1564.3,598.4 1565.0,594.7 1565.7,591.7 1566.4,593.6 1567.1,594.2 1567.8,598.4 1568.5,606.6 1569.2,609.9 1569.9,610.1 1570.6,606.7 1571.3,602.6 1572.0,606.3 1572.7,611.3 1573.4,614.6 1574.1,615.4 1574.8,616.7 1575.5,617.7 1576.2,616.6 1576.9,616.0 1577.6,614.6 1578.3,615.6 1579.0,614.0 1579.7,612.2 1580.4,612.8 1581.1,611.1 1581.8,610.3 1582.5,607.3 1583.2,604.2 1583.9,601.9 1584.6,598.6 1585.3,596.2 1586.0,598.6 1586.7,603.8 1587.4,608.6 1588.1,610.9 1588.8,595.8 1589.5,584.1 1590.2,579.9 1590.9,582.9 1591.6,585.9 1592.3,596.5 1593.0,604.0 1593.7,601.7 1594.4,598.8 1595.1,600.8 1595.8,604.8 1596.5,604.6 1597.2,605.6 1597.9,605.1 1598.6,601.6 1599.3,598.7 1600.0,596.1 1600.7,595.3 1601.4,599.4 1602.1,598.5 1602.8,599.2 1603.5,601.1 1604.2,604.3 1604.9,605.3 1605.6,608.3 1606.3,612.5 1607.0,616.7 1607.7,613.8 1608.4,611.6 1609.1,615.5 1609.8,621.2 1610.5,620.3 1611.2,622.4 1611.9,623.3 1612.6,623.5 1613.3,624.1 1614.0,623.3 1614.7,624.3 1615.4,618.7 1616.1,616.0 1616.8,622.7 1617.5,624.3 1618.2,624.3 1618.9,623.3 1619.6,620.1 1620.3,613.4 1621.0,616.6 1621.7,617.8 1622.4,614.6 1623.1,613.6 1623.8,609.1 1624.5,605.2 1625.2,607.0 1625.9,612.7 1626.6,604.8 1627.3,605.3 1628.0,603.8 1628.7,605.0 1629.4,611.2 1630.1,614.3 1630.8,610.4 1631.5,601.0 1632.2,601.5 1632.9,602.2 1633.6,607.1 1634.3,610.4 1635.0,611.6 1635.7,605.5 1636.4,601.4 1637.1,600.2 1637.8,596.9 1638.5,600.8 1639.2,601.3 1639.9,606.3 1640.6,609.3 1641.3,614.1 1642.0,616.4 1642.7,619.4 1643.4,621.0 1644.1,623.0 1644.8,618.8 1645.5,615.2 1646.2,609.5 1646.9,604.7 1647.6,609.1 1648.3,611.7 1649.0,613.7 1649.7,615.4 1650.4,616.6 1651.1,614.1 1651.8,611.3 1652.5,612.9 1653.2,613.8 1653.9,614.0 1654.6,616.9 1655.3,620.6 1656.0,622.6 1656.7,621.8 1657.4,624.2 1658.1,623.9 1658.8,624.2 1659.5,623.3 1660.2,622.4 1660.9,615.6 1661.6,612.9 1662.3,612.9 1663.0,610.2 1663.7,611.1 1664.4,611.4 1665.1,611.8 1665.8,611.6 1666.5,609.1 1667.2,610.5 1667.9,607.5 1668.6,608.1 1669.3,606.1 1670.0,602.2 1670.7,600.2 1671.4,599.0 1672.1,596.4 1672.8,599.6 1673.5,604.1 1674.2,603.5 1674.9,604.8 1675.6,603.3 1676.3,602.8 1677.0,604.4 1677.7,604.7 1678.4,606.9 1679.1,605.5 1679.8,605.6 1680.5,607.0 1681.2,610.9 1681.9,613.7 1682.6,619.9 1683.3,619.6 1684.0,616.3 1684.7,612.5 1685.4,607.8 1686.1,605.8 1686.8,607.6 1687.5,616.4 1688.2,620.6 1688.9,622.0 1689.6,623.7 1690.3,618.6 1691.0,618.8 1691.7,621.1 1692.4,622.7 1693.1,623.4 1693.8,623.6 1694.5,622.4 1695.2,623.6 1695.9,622.8 1696.6,624.3 1697.3,622.7 1698.0,622.7 1698.7,621.9 1699.4,615.3 1700.1,611.6 1700.8,606.5 1701.5,606.6 1702.2,607.2 1702.9,606.4 1703.6,606.0 1704.3,604.5 1705.0,602.9 1705.7,601.1 1706.4,603.7 1707.1,604.7 1707.8,606.6 1708.5,611.9 1709.2,619.5 1709.9,619.0 1710.6,619.6 1711.3,609.0 1712.0,602.0 1712.7,600.8 1713.4,599.6 1714.1,598.5 1714.8,602.1 1715.5,603.5 1716.2,604.1 1716.9,607.8 1717.6,608.6 1718.3,604.2 1719.0,599.3 1719.7,597.1 1720.4,596.3 1721.1,596.7 1721.8,598.2 1722.5,601.4 1723.2,603.4 1723.9,603.6 1724.6,605.2 1725.3,602.9 1726.0,608.5 1726.7,610.2 1727.4,611.0 1728.1,614.5 1728.8,617.0 1729.5,617.5 1730.2,620.1 1730.9,623.3 1731.6,623.7 1732.3,624.2 1733.0,620.2 1733.7,617.3 1734.4,613.3 1735.1,610.0 1735.8,611.4 1736.5,614.5 1737.2,618.4 1737.9,620.9 1738.6,621.6 1739.3,618.2 1740.0,615.2 1740.7,617.3 1741.4,622.0 1742.1,623.1 1742.8,619.4 1743.5,613.7 1744.2,609.3 1744.9,606.7 1745.6,610.2 1746.3,615.9 1747.0,611.7 1747.7,604.8 1748.4,603.5 1749.1,599.0 1749.8,595.6 1750.5,598.4 1751.2,599.9 1751.9,601.6 1752.6,604.1 1753.3,604.5 1754.0,606.0 1754.7,605.7 1755.4,603.1 1756.1,606.2 1756.8,609.2 1757.5,609.5 1758.2,615.2 1758.9,620.4 1759.6,613.2 1760.3,606.4 1761.0,602.1 1761.7,609.7 1762.4,617.4 1763.1,622.1 1763.8,622.8 1764.5,616.6 1765.2,608.9 1765.9,605.1 1766.6,602.7 1767.3,604.5 1768.0,607.1 1768.7,609.2 1769.4,609.7 1770.1,611.6 1770.8,616.3 1771.5,619.2 1772.2,620.9 1772.9,623.3 1773.6,622.9 1774.3,621.5 1775.0,621.1 1775.7,621.4 1776.4,618.9 1777.1,616.2 1777.8,613.6 1778.5,609.9 1779.2,608.4 1779.9,606.0 1780.6,606.3 1781.3,607.3 1782.0,609.8 1782.7,610.2 1783.4,610.1 1784.1,607.4 1784.8,603.5 1785.5,600.9 1786.2,602.4 1786.9,604.4 1787.6,609.5 1788.3,615.6 1789.0,612.5 1789.7,610.0 1790.4,607.0 1791.1,606.1 1791.8,602.4 1792.5,605.8 1793.2,609.0 1793.9,610.1 1794.6,607.2 1795.3,608.5 1796.0,608.9 1796.7,610.6 1797.4,612.7 1798.1,614.2 1798.8,616.9 1799.5,619.5 1800.2,622.7 1800.9,622.4 1801.6,618.2 1802.3,616.1 1803.0,616.9 1803.7,618.7 1804.4,618.1 1805.1,618.6 1805.8,617.3 1806.5,616.2 1807.2,618.8 1807.9,622.8 1808.6,623.4 1809.3,623.9 1810.0,624.1 1810.7,624.3 1811.4,623.4 1812.1,618.0 1812.8,616.1 1813.5,615.9 1814.2,613.5 1814.9,612.2 1815.6,613.6 1816.3,616.4 1817.0,614.1 1817.7,614.2 1818.4,613.1 1819.1,619.4 1819.8,621.2 1820.5,622.2 1821.2,619.0 1821.9,616.3 1822.6,611.7 1823.3,606.2 1824.0,610.4 1824.7,613.1 1825.4,606.1 1826.1,601.1 1826.8,597.6 1827.5,599.0 1828.2,600.8 1828.9,605.8 1829.6,610.9 1830.3,615.7 1831.0,613.1 1831.7,608.8 1832.4,613.1 1833.1,616.8 1833.8,616.8 1834.5,611.6 1835.2,606.2 1835.9,603.7 1836.6,606.8 1837.3,608.9 1838.0,611.8 1838.7,612.5 1839.4,609.7 1840.1,607.7 1840.8,609.9 1841.5,610.8 1842.2,614.7 1842.9,619.4 1843.6,622.5 1844.3,623.5 1845.0,621.0 1845.7,619.2 1846.4,617.8 1847.1,616.7 1847.8,617.4 1848.5,620.1 1849.2,620.7 1849.9,615.7 1850.6,608.7 1851.3,606.6 1852.0,604.2 1852.7,605.3 1853.4,607.6 1854.1,612.2 1854.8,610.9 1855.5,615.8 1856.2,614.0 1856.9,612.1 1857.6,614.6 1858.3,614.1 1859.0,616.7 1859.7,615.6 1860.4,613.7 1861.1,611.2 1861.8,608.0 1862.5,604.9 1863.2,603.4 1863.9,598.5 1864.6,597.5 1865.3,601.5 1866.0,604.0 1866.7,604.0" fill="none" stroke="#f2f2f2" stroke-width="1.3" stroke-linejoin="round"/><path d="M1335.9 541V597" stroke="#f7f3b0" stroke-width="1.4"/><circle cx="1336" cy="536.5" r="4.9" fill="#e01414"/><circle cx="1382.4" cy="550.2" r="4.9" fill="#1e9be2"/><circle cx="1401" cy="470" r="4.9" fill="#f3ee1c"/><text x="1237" y="434.0" font-size="16.1" text-anchor="end" font-family="Liberation Sans, sans-serif" fill="#fff">-10.0</text><text x="1237" y="473.1" font-size="16.1" text-anchor="end" font-family="Liberation Sans, sans-serif" fill="#fff">-20.0</text><text x="1237" y="512.1" font-size="16.1" text-anchor="end" font-family="Liberation Sans, sans-serif" fill="#fff">-30.0</text><text x="1237" y="551.2" font-size="16.1" text-anchor="end" font-family="Liberation Sans, sans-serif" fill="#fff">-40.0</text><text x="1237" y="590.2" font-size="16.1" text-anchor="end" font-family="Liberation Sans, sans-serif" fill="#fff">-50.0</text><text x="1237" y="629.3" font-size="16.1" text-anchor="end" font-family="Liberation Sans, sans-serif" fill="#fff">-60.0</text><text x="1276.7" y="642" font-size="13.5" letter-spacing="-0.3" text-anchor="middle" font-family="Liberation Sans, sans-serif" fill="#fff">-60</text><text x="1318.0" y="642" font-size="13.5" letter-spacing="-0.3" text-anchor="middle" font-family="Liberation Sans, sans-serif" fill="#fff">-40</text><text x="1359.4" y="642" font-size="13.5" letter-spacing="-0.3" text-anchor="middle" font-family="Liberation Sans, sans-serif" fill="#fff">-20</text><text x="1400.8" y="642" font-size="13.5" letter-spacing="-0.3" text-anchor="middle" font-family="Liberation Sans, sans-serif" fill="#fff">0</text><text x="1442.2" y="642" font-size="13.5" letter-spacing="-0.3" text-anchor="middle" font-family="Liberation Sans, sans-serif" fill="#fff">20</text><text x="1483.6" y="642" font-size="13.5" letter-spacing="-0.3" text-anchor="middle" font-family="Liberation Sans, sans-serif" fill="#fff">40</text><text x="1524.9" y="642" font-size="13.5" letter-spacing="-0.3" text-anchor="middle" font-family="Liberation Sans, sans-serif" fill="#fff">60</text><text x="1566.3" y="642" font-size="13.5" letter-spacing="-0.3" text-anchor="middle" font-family="Liberation Sans, sans-serif" fill="#fff">80</text><text x="1607.7" y="642" font-size="13.5" letter-spacing="-0.3" text-anchor="middle" font-family="Liberation Sans, sans-serif" fill="#fff">100</text><text x="1649.1" y="642" font-size="13.5" letter-spacing="-0.3" text-anchor="middle" font-family="Liberation Sans, sans-serif" fill="#fff">120</text><text x="1690.5" y="642" font-size="13.5" letter-spacing="-0.3" text-anchor="middle" font-family="Liberation Sans, sans-serif" fill="#fff">140</text><text x="1731.8" y="642" font-size="13.5" letter-spacing="-0.3" text-anchor="middle" font-family="Liberation Sans, sans-serif" fill="#fff">160</text><text x="1773.2" y="642" font-size="13.5" letter-spacing="-0.3" text-anchor="middle" font-family="Liberation Sans, sans-serif" fill="#fff">180</text><text x="1814.6" y="642" font-size="13.5" letter-spacing="-0.3" text-anchor="middle" font-family="Liberation Sans, sans-serif" fill="#fff">200</text><text x="1856.0" y="642" font-size="13.5" letter-spacing="-0.3" text-anchor="middle" font-family="Liberation Sans, sans-serif" fill="#fff">220</text><text x="1557.5" y="665.8" font-size="16.6" text-anchor="middle" textLength="187" lengthAdjust="spacingAndGlyphs" font-family="Liberation Sans, sans-serif" fill="#fff">Distance Difference (km)</text><text transform="translate(1177.6 527.3) rotate(-90)" font-size="15.5" font-weight="bold" text-anchor="middle" textLength="112.7" lengthAdjust="spacingAndGlyphs" font-family="Liberation Sans, sans-serif" fill="#fff">Magnitude (dB)</text></svg>
<svg style="left:925px;top:714px" width="981" height="245" viewBox="925 714 981 245"><path d="M1085.5 733.0V897.7M1166.5 733.0V897.7M1246.5 733.0V897.7M1327.5 733.0V897.7M1407.5 733.0V897.7M1488.5 733.0V897.7M1568.5 733.0V897.7M1649.5 733.0V897.7M1729.5 733.0V897.7M1810.5 733.0V897.7M1035.0 766.5H1859.5M1035.0 799.5H1859.5M1035.0 832.5H1859.5M1035.0 866.5H1859.5" stroke="#a2a2a2" stroke-width="1" stroke-opacity="0.9" fill="none"/><path d="M1035.0 733.0H1859.5V897.7H1035.0" stroke="#9a9a9a" stroke-width="2" fill="none"/><path d="M1035.0 732.0V898.7" stroke="#d33a3a" stroke-width="1.6"/><path d="M1139.0 733.0V897.7M1293.5 733.0V897.7M1448.0 733.0V897.7M1602.5 733.0V897.7M1757.0 733.0V897.7" stroke="#e2d92a" stroke-width="2.2" stroke-dasharray="2.2 2.9"/><path d="M1161.75 897.7L1162.55 756.0L1163.45 756.0L1163.85 849.5L1164.25 849.5L1165.10 897.7ZM1219.35 897.7L1220.15 762.6L1221.05 762.6L1221.45 851.8L1221.85 851.8L1222.70 897.7ZM1257.75 897.7L1258.55 755.5L1259.45 755.5L1259.85 849.4L1260.25 849.4L1261.10 897.7ZM1277.55 897.7L1278.35 761.0L1279.25 761.0L1279.65 851.2L1280.05 851.2L1280.90 897.7ZM1316.05 897.7L1316.85 766.5L1317.75 766.5L1318.15 853.1L1318.55 853.1L1319.40 897.7ZM1373.75 897.7L1374.55 760.0L1375.45 760.0L1375.85 850.9L1376.25 850.9L1377.10 897.7ZM1412.45 897.7L1413.25 759.0L1414.15 759.0L1414.55 850.5L1414.95 850.5L1415.80 897.7ZM1431.75 897.7L1432.55 757.0L1433.45 757.0L1433.85 849.9L1434.25 849.9L1435.10 897.7ZM1470.75 897.7L1471.55 750.4L1472.45 750.4L1472.85 847.6L1473.25 847.6L1474.10 897.7ZM1528.75 897.7L1529.55 749.0L1530.45 749.0L1530.85 847.1L1531.25 847.1L1532.10 897.7ZM1567.75 897.7L1568.55 747.7L1569.45 747.7L1569.85 846.7L1570.25 846.7L1571.10 897.7ZM1586.55 897.7L1587.35 745.3L1588.25 745.3L1588.65 845.9L1589.05 845.9L1589.90 897.7ZM1625.35 897.7L1626.15 736.0L1627.05 736.0L1627.45 842.7L1627.85 842.7L1628.70 897.7ZM1683.15 897.7L1683.95 733.5L1684.85 733.5L1685.25 841.9L1685.65 841.9L1686.50 897.7ZM1721.95 897.7L1722.75 733.5L1723.65 733.5L1724.05 841.9L1724.45 841.9L1725.30 897.7ZM1741.35 897.7L1742.15 741.0L1743.05 741.0L1743.45 844.4L1743.85 844.4L1744.70 897.7Z" fill="#bdebbd" stroke="#8fcf92" stroke-width="0.35"/><path d="M1163.00 756.5V897.7M1220.60 763.1V897.7M1259.00 756.0V897.7M1278.80 761.5V897.7M1317.30 767.0V897.7M1375.00 760.5V897.7M1413.70 759.5V897.7M1433.00 757.5V897.7M1472.00 750.9V897.7M1530.00 749.5V897.7M1569.00 748.2V897.7M1587.80 745.8V897.7M1626.60 736.5V897.7M1684.40 734.0V897.7M1723.20 734.0V897.7M1742.60 741.5V897.7" stroke="#d2f5d2" stroke-width="0.9" fill="none"/><text x="1022.5" y="738.2" font-size="16" text-anchor="end" font-family="Liberation Sans, sans-serif" fill="#fff">1.0</text><text x="1022.5" y="771.4" font-size="16" text-anchor="end" font-family="Liberation Sans, sans-serif" fill="#fff">0.8</text><text x="1022.5" y="804.6" font-size="16" text-anchor="end" font-family="Liberation Sans, sans-serif" fill="#fff">0.6</text><text x="1022.5" y="837.8" font-size="16" text-anchor="end" font-family="Liberation Sans, sans-serif" fill="#fff">0.4</text><text x="1022.5" y="871.0" font-size="16" text-anchor="end" font-family="Liberation Sans, sans-serif" fill="#fff">0.2</text><text x="1022.5" y="904.2" font-size="16" text-anchor="end" font-family="Liberation Sans, sans-serif" fill="#fff">0.0</text><text x="1085.8" y="917.8" font-size="16.4" text-anchor="middle" font-family="Liberation Sans, sans-serif" fill="#fff">-900</text><text x="1166.3" y="917.8" font-size="16.4" text-anchor="middle" font-family="Liberation Sans, sans-serif" fill="#fff">-700</text><text x="1246.8" y="917.8" font-size="16.4" text-anchor="middle" font-family="Liberation Sans, sans-serif" fill="#fff">-500</text><text x="1327.3" y="917.8" font-size="16.4" text-anchor="middle" font-family="Liberation Sans, sans-serif" fill="#fff">-300</text><text x="1407.8" y="917.8" font-size="16.4" text-anchor="middle" font-family="Liberation Sans, sans-serif" fill="#fff">-100</text><text x="1488.2" y="917.8" font-size="16.4" text-anchor="middle" font-family="Liberation Sans, sans-serif" fill="#fff">100</text><text x="1568.7" y="917.8" font-size="16.4" text-anchor="middle" font-family="Liberation Sans, sans-serif" fill="#fff">300</text><text x="1649.2" y="917.8" font-size="16.4" text-anchor="middle" font-family="Liberation Sans, sans-serif" fill="#fff">500</text><text x="1729.7" y="917.8" font-size="16.4" text-anchor="middle" font-family="Liberation Sans, sans-serif" fill="#fff">700</text><text x="1810.2" y="917.8" font-size="16.4" text-anchor="middle" font-family="Liberation Sans, sans-serif" fill="#fff">900</text><text x="1447.8" y="941.8" font-size="16.8" text-anchor="middle" textLength="101.7" lengthAdjust="spacingAndGlyphs" font-family="Liberation Sans, sans-serif" fill="#fff">TII Subcarrier</text><text transform="translate(978.3 815.4) rotate(-90)" font-size="15" font-weight="bold" text-anchor="middle" textLength="75.2" lengthAdjust="spacingAndGlyphs" font-family="Liberation Sans, sans-serif" fill="#fff">Magnitude</text></svg>
<svg style="left:1640px;top:0" width="266" height="28" viewBox="1640 0 266 28"><rect x="1654.75" y="0.45" width="23.6" height="16.95" stroke="#fff" stroke-width="1.6" fill="none"/><path d="M1654 4.85H1679" stroke="#fff" stroke-width="2.3"/><path d="M1668.9 2.55h1.5m1.7 0h1.5m1.7 0h1.5" stroke="#fff" stroke-width="1.5"/><path d="M1718.7 6.6L1720 5.5H1726.2V18.2H1729.3V20.6H1718.2V18.2H1721.4V8.1H1718.7Z" stroke="#e4e4e4" stroke-width="1.2" fill="none" stroke-linejoin="round"/><circle cx="1723.3" cy="-0.6" r="3.3" stroke="#e4e4e4" stroke-width="1.2" fill="none"/><path d="M1779.31 -0.10L1779.60 -3.19L1782.80 -3.19L1783.09 -0.10L1786.08 1.14L1788.48 -0.84L1790.74 1.42L1788.76 3.82L1790.00 6.81L1793.09 7.10L1793.09 10.30L1790.00 10.59L1788.76 13.58L1790.74 15.98L1788.48 18.24L1786.08 16.26L1783.09 17.50L1782.80 20.59L1779.60 20.59L1779.31 17.50L1776.32 16.26L1773.92 18.24L1771.66 15.98L1773.64 13.58L1772.40 10.59L1769.31 10.30L1769.31 7.10L1772.40 6.81L1773.64 3.82L1771.66 1.42L1773.92 -0.84L1776.32 1.14Z" stroke="#fff" stroke-width="1.7" fill="none" stroke-linejoin="round"/><circle cx="1781.2" cy="8.7" r="3.8" stroke="#fff" stroke-width="1.8" fill="none"/><path d="M1826.5 -4V21.5L1851 9Z" fill="#2a6dae"/><path d="M1858.8 -4V21.5L1883.2 9Z" fill="#527f55"/><path d="M1890.2 -2.8L1913.2 20.2M1890.2 20.2L1913.2 -2.8" stroke="#e85a1a" stroke-width="4.4" fill="none"/></svg>
<svg style="left:1870px;top:31px" width="36" height="20" viewBox="1870 31 36 20"><path d="M1876.9 34.4H1892.4L1884.65 47.9Z" stroke="#e9eef5" stroke-width="1.1" fill="none"/><path d="M1899.6 34.8L1913 48.2M1899.6 48.2L1913 34.8" stroke="#b5592b" stroke-width="2.9" fill="none"/></svg>
<svg style="left:1870px;top:386.2px" width="36" height="20" viewBox="1870 386.2 36 20"><path d="M1876.9 389.59999999999997H1892.4L1884.65 403.09999999999997Z" stroke="#e9eef5" stroke-width="1.1" fill="none"/><path d="M1899.6 390.0L1913 403.4M1899.6 403.4L1913 390.0" stroke="#e0601e" stroke-width="3.3" fill="none"/></svg>
<svg style="left:1870px;top:691.2px" width="36" height="20" viewBox="1870 691.2 36 20"><path d="M1876.9 694.6H1892.4L1884.65 708.1Z" stroke="#e9eef5" stroke-width="1.1" fill="none"/><path d="M1899.6 695.0L1913 708.4000000000001M1899.6 708.4000000000001L1913 695.0" stroke="#e0601e" stroke-width="3.3" fill="none"/></svg>
</body></html>
